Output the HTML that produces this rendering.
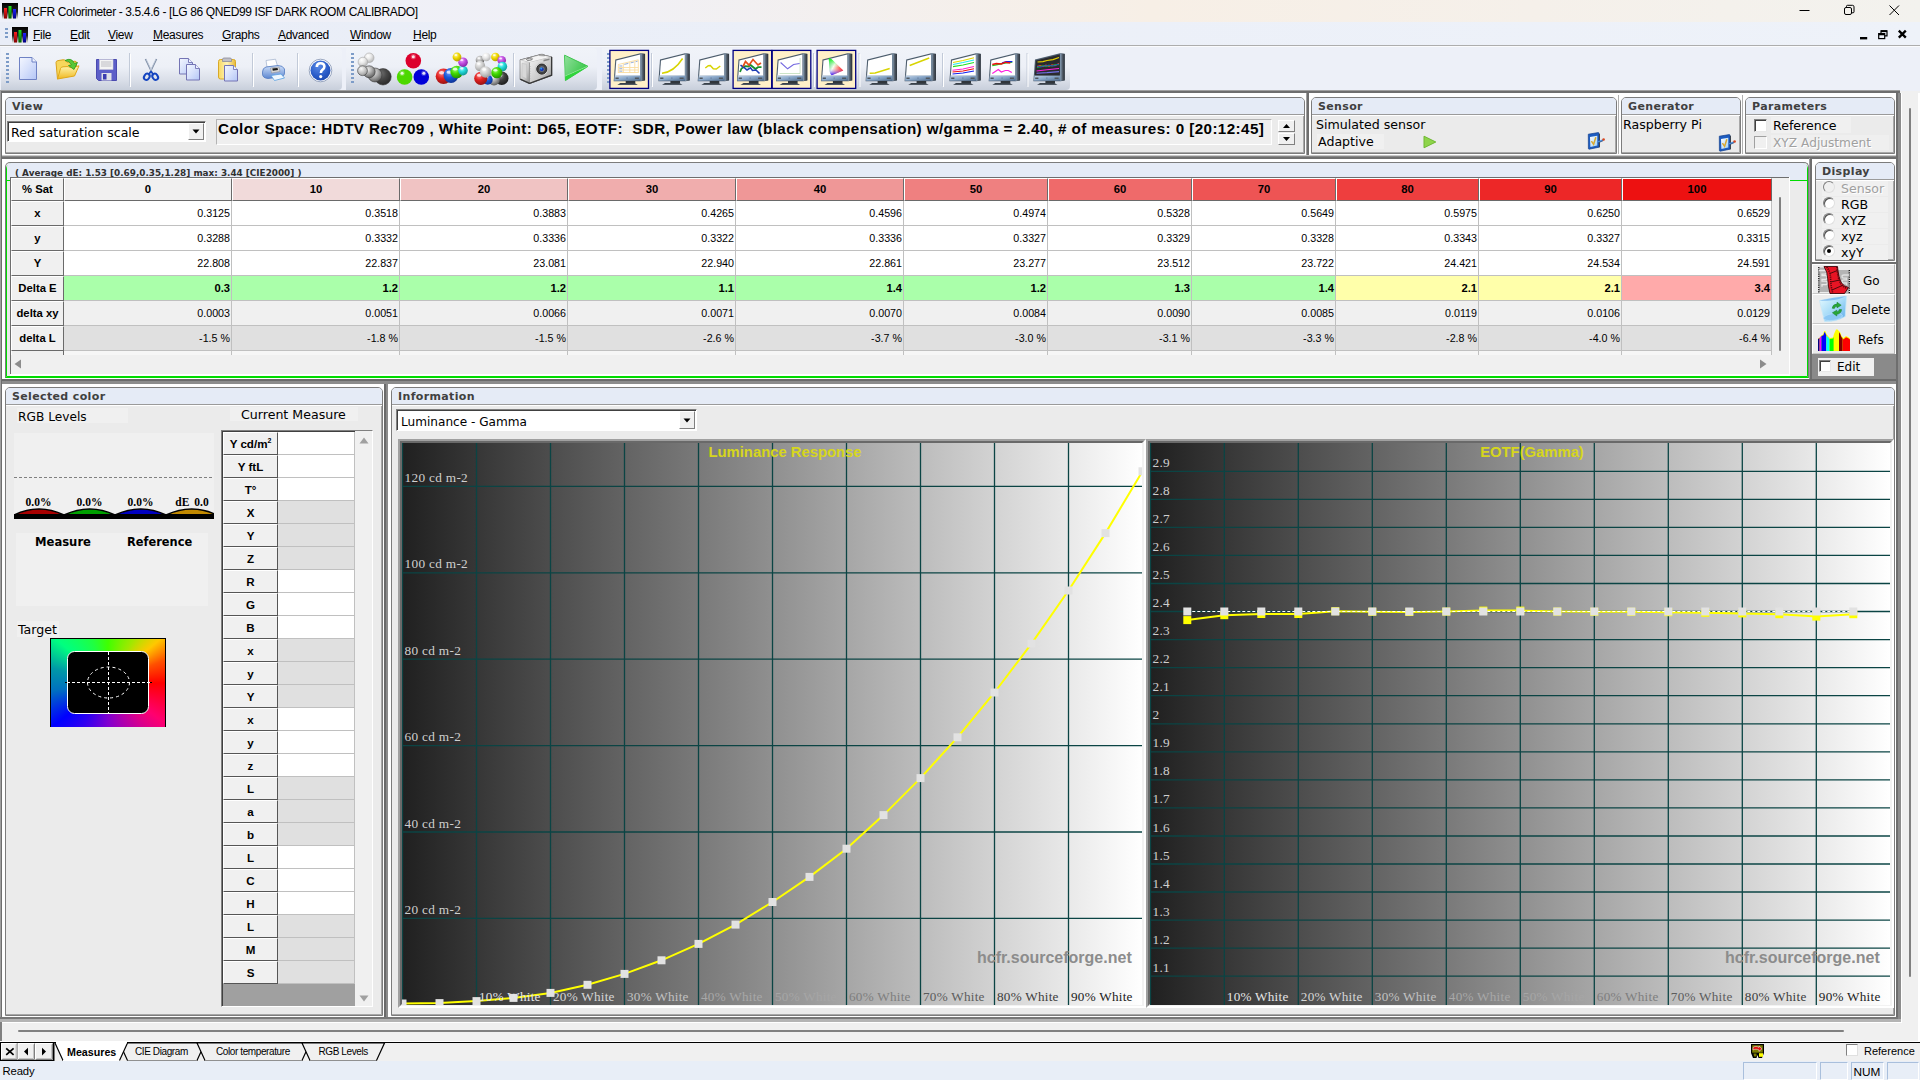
<!DOCTYPE html><html><head><meta charset="utf-8"><title>HCFR Colorimeter</title><style>
html,body{margin:0;padding:0;}
body{width:1920px;height:1080px;overflow:hidden;background:#f0f0f0;position:relative;font-family:"Liberation Sans",sans-serif;font-size:12px;color:#000;}
.a{position:absolute;}
.t{position:absolute;white-space:nowrap;line-height:1;}
.dv{font-family:"DejaVu Sans","Liberation Sans",sans-serif;}
.sf{font-family:"Liberation Serif",serif;}
.grp{position:absolute;box-sizing:border-box;border:1px solid #7c7c7c;border-radius:5px 5px 0 0;background:#ebebeb;box-shadow:inset -1px -1px 0 #a8a8a8;}
.grp .hd{position:absolute;left:0;top:0;right:0;height:16px;background:#e5ebf6;border-bottom:1px solid #9a9a9a;border-radius:4px 4px 0 0;box-shadow:0 1px 0 #fff;}
.grp .hd span{position:absolute;left:6px;top:1.5px;font:bold 11px "DejaVu Sans",sans-serif;letter-spacing:0.36px;color:#404040;white-space:nowrap;line-height:14px;}
.pane{position:absolute;background:#fff;box-sizing:border-box;}
.sunk{position:absolute;box-sizing:border-box;border:1px solid;border-color:#808080 #fff #fff #808080;}
.lbl{position:absolute;white-space:nowrap;font:12.6px "DejaVu Sans",sans-serif;line-height:15px;}
.cb{position:absolute;width:13px;height:13px;box-sizing:border-box;background:#fff;border:1px solid;border-color:#808080 #e8e8e8 #e8e8e8 #808080;box-shadow:inset 1px 1px 0 #404040;}
.rd{position:absolute;width:12px;height:12px;box-sizing:border-box;border-radius:50%;background:#fff;border:1px solid;border-color:#808080 #e0e0e0 #e0e0e0 #808080;box-shadow:inset 1px 1px 0 #505050;}
table{border-collapse:collapse;}
</style></head><body>
<div class="a" style="left:0;top:0;width:1920px;height:22px;background:linear-gradient(90deg,#eef0f9 0%,#f0f0f6 30%,#f7efe6 60%,#f5f0ea 80%,#f3f2ee 100%);"></div>
<svg class="a" style="left:2px;top:3px" width="16" height="16" viewBox="0 0 16 16"><defs><linearGradient id="lg23" x1="0" y1="0" x2="0" y2="1"><stop offset="0" stop-color="#000"/><stop offset="0.55" stop-color="#222"/><stop offset="1" stop-color="#eee"/></linearGradient><linearGradient id="lr23" x1="0" y1="0" x2="0" y2="1"><stop offset="0" stop-color="#ff2020"/><stop offset="1" stop-color="#800000"/></linearGradient><linearGradient id="lgr23" x1="0" y1="0" x2="0" y2="1"><stop offset="0" stop-color="#20e020"/><stop offset="1" stop-color="#006000"/></linearGradient><linearGradient id="lb23" x1="0" y1="0" x2="0" y2="1"><stop offset="0" stop-color="#2020ff"/><stop offset="1" stop-color="#000080"/></linearGradient></defs><rect width="16" height="16" fill="url(#lg23)"/><rect x="2" y="5" width="3" height="10.5" fill="url(#lr23)"/><rect x="6.5" y="3" width="3" height="12.5" fill="url(#lgr23)"/><rect x="11" y="6" width="3" height="9.5" fill="url(#lb23)"/></svg>
<div class="t" id="title" style="left:23px;top:6px;font-size:12px;letter-spacing:-0.37px;">HCFR Colorimeter - 3.5.4.6 - [LG 86 QNED99 ISF DARK ROOM CALIBRADO]</div>
<svg class="a" style="left:1790px;top:0" width="130" height="22" viewBox="0 0 130 22"><g stroke="#000" stroke-width="1" fill="none"><path d="M9.5 10.5h10"/><rect x="54.5" y="7.5" width="7" height="7" rx="1.5"/><path d="M56.5 7.5v-1.2q0-1 1-1h5q1.5 0 1.5 1.5v5q0 1-1 1h-1.2"/><path d="M99.5 5.5l9.5 9.5m0-9.5l-9.5 9.5"/></g></svg>
<div class="a" style="left:0;top:22px;width:1920px;height:24px;background:linear-gradient(90deg,#e9edf7,#eef2f9);"></div>
<div class="a" style="left:0;top:45px;width:1920px;height:1px;background:#adadad;"></div>
<div class="a" style="left:0;top:46px;width:1920px;height:1px;background:#fafbfd;z-index:1;"></div>
<div class="a" style="left:5px;top:28px;width:3px;height:11px;background:repeating-linear-gradient(180deg,#7d9cc8 0 2px,transparent 2px 4px);"></div>
<svg class="a" style="left:12px;top:27px" width="16" height="16" viewBox="0 0 16 16"><defs><linearGradient id="lg1227" x1="0" y1="0" x2="0" y2="1"><stop offset="0" stop-color="#000"/><stop offset="0.55" stop-color="#222"/><stop offset="1" stop-color="#eee"/></linearGradient><linearGradient id="lr1227" x1="0" y1="0" x2="0" y2="1"><stop offset="0" stop-color="#ff2020"/><stop offset="1" stop-color="#800000"/></linearGradient><linearGradient id="lgr1227" x1="0" y1="0" x2="0" y2="1"><stop offset="0" stop-color="#20e020"/><stop offset="1" stop-color="#006000"/></linearGradient><linearGradient id="lb1227" x1="0" y1="0" x2="0" y2="1"><stop offset="0" stop-color="#2020ff"/><stop offset="1" stop-color="#000080"/></linearGradient></defs><rect width="16" height="16" fill="url(#lg1227)"/><rect x="2" y="5" width="3" height="10.5" fill="url(#lr1227)"/><rect x="6.5" y="3" width="3" height="12.5" fill="url(#lgr1227)"/><rect x="11" y="6" width="3" height="9.5" fill="url(#lb1227)"/></svg>
<div class="t mn" style="left:33px;top:29px;font-size:12px;letter-spacing:-0.3px;"><u>F</u>ile</div>
<div class="t mn" style="left:70px;top:29px;font-size:12px;letter-spacing:-0.3px;"><u>E</u>dit</div>
<div class="t mn" style="left:108px;top:29px;font-size:12px;letter-spacing:-0.3px;"><u>V</u>iew</div>
<div class="t mn" style="left:153px;top:29px;font-size:12px;letter-spacing:-0.3px;"><u>M</u>easures</div>
<div class="t mn" style="left:222px;top:29px;font-size:12px;letter-spacing:-0.3px;"><u>G</u>raphs</div>
<div class="t mn" style="left:278px;top:29px;font-size:12px;letter-spacing:-0.3px;"><u>A</u>dvanced</div>
<div class="t mn" style="left:350px;top:29px;font-size:12px;letter-spacing:-0.3px;"><u>W</u>indow</div>
<div class="t mn" style="left:413px;top:29px;font-size:12px;letter-spacing:-0.3px;"><u>H</u>elp</div>
<svg class="a" style="left:1855px;top:26px" width="60" height="16" viewBox="0 0 60 16"><g stroke="#000" fill="none"><path d="M5 12.2h7.2" stroke-width="2.4"/><rect x="23.7" y="7.6" width="6" height="5" stroke-width="1.2"/><path d="M23.7 8.2h6" stroke-width="2.2"/><path d="M26 7v-2.2h6v5h-2" stroke-width="1.2"/><path d="M26 5.2h6" stroke-width="1.8"/><path d="M43.8 4.6l7 7m0-7l-7 7" stroke-width="2.3"/></g></svg>
<div class="a" style="left:0;top:46px;width:1920px;height:45px;background:#edf0f8;"></div>
<div class="a" style="left:1px;top:48px;width:341px;height:42px;border-radius:0 4px 4px 0;background:linear-gradient(180deg,#f0f3f9 0%,#edf0f7 45%,#d9dee8 78%,#c8cfdb 100%);"></div>
<div class="a" style="left:6px;top:53px;width:3px;height:30px;background:repeating-linear-gradient(180deg,#7d9cc8 0 2px,transparent 2px 4px);"></div>
<div class="a" style="left:346px;top:48px;width:251px;height:42px;border-radius:0 4px 4px 0;background:linear-gradient(180deg,#f0f3f9 0%,#edf0f7 45%,#d9dee8 78%,#c8cfdb 100%);"></div>
<div class="a" style="left:351px;top:53px;width:3px;height:30px;background:repeating-linear-gradient(180deg,#7d9cc8 0 2px,transparent 2px 4px);"></div>
<div class="a" style="left:602px;top:48px;width:468px;height:42px;border-radius:0 4px 4px 0;background:linear-gradient(180deg,#f0f3f9 0%,#edf0f7 45%,#d9dee8 78%,#c8cfdb 100%);"></div>
<div class="a" style="left:607px;top:53px;width:3px;height:30px;background:repeating-linear-gradient(180deg,#7d9cc8 0 2px,transparent 2px 4px);"></div>
<svg class="a" style="left:0;top:46px" width="1100" height="46" viewBox="0 46 1100 46">
<defs>
<linearGradient id="pg" x1="0" y1="0" x2="1" y2="1"><stop offset="0" stop-color="#f4f7ff"/><stop offset="0.5" stop-color="#d6e0fb"/><stop offset="1" stop-color="#b4c6f6"/></linearGradient>
<linearGradient id="fold" x1="0" y1="0" x2="0" y2="1"><stop offset="0" stop-color="#fff6b0"/><stop offset="1" stop-color="#f0b820"/></linearGradient>
<linearGradient id="clipb" x1="0" y1="0" x2="1" y2="0"><stop offset="0" stop-color="#f8d860"/><stop offset="0.5" stop-color="#fff4b8"/><stop offset="1" stop-color="#e8b838"/></linearGradient>
<linearGradient id="mside" x1="0" y1="0" x2="1" y2="0"><stop offset="0" stop-color="#90a8c0"/><stop offset="0.45" stop-color="#566270"/><stop offset="1" stop-color="#2a2e34"/></linearGradient>
<linearGradient id="mbez" x1="0" y1="0" x2="1" y2="1"><stop offset="0" stop-color="#c8d8ea"/><stop offset="0.5" stop-color="#88a6c8"/><stop offset="1" stop-color="#506c8c"/></linearGradient>
<linearGradient id="mbase" x1="0" y1="0" x2="0" y2="1"><stop offset="0" stop-color="#2c3238"/><stop offset="1" stop-color="#5a6470"/></linearGradient>
<linearGradient id="play" x1="0" y1="0" x2="1" y2="0.6"><stop offset="0" stop-color="#8fe09a"/><stop offset="0.5" stop-color="#66d274"/><stop offset="1" stop-color="#38c848"/></linearGradient>
<linearGradient id="cam" x1="0" y1="0" x2="1" y2="1"><stop offset="0" stop-color="#f4f4f4"/><stop offset="0.6" stop-color="#c8c8c8"/><stop offset="1" stop-color="#8c8c8c"/></linearGradient>
<linearGradient id="prn" x1="0" y1="0" x2="0" y2="1"><stop offset="0" stop-color="#cfe0fa"/><stop offset="1" stop-color="#5c86d0"/></linearGradient>
<radialGradient id="help" cx="0.4" cy="0.3" r="0.8"><stop offset="0" stop-color="#5a8ae6"/><stop offset="0.6" stop-color="#2a5cc8"/><stop offset="1" stop-color="#1a44a8"/></radialGradient>
<radialGradient id="br" cx="0.38" cy="0.3" r="0.75"><stop offset="0" stop-color="#ff6080"/><stop offset="0.45" stop-color="#d80028"/><stop offset="1" stop-color="#90001c"/></radialGradient>
<radialGradient id="bg" cx="0.38" cy="0.3" r="0.75"><stop offset="0" stop-color="#a0ff70"/><stop offset="0.45" stop-color="#40d800"/><stop offset="1" stop-color="#208800"/></radialGradient>
<radialGradient id="bb" cx="0.38" cy="0.3" r="0.75"><stop offset="0" stop-color="#6070ff"/><stop offset="0.45" stop-color="#0000d8"/><stop offset="1" stop-color="#000080"/></radialGradient>
<radialGradient id="by" cx="0.38" cy="0.3" r="0.75"><stop offset="0" stop-color="#fff8a0"/><stop offset="0.45" stop-color="#f0d800"/><stop offset="1" stop-color="#b09800"/></radialGradient>
<radialGradient id="bm" cx="0.38" cy="0.3" r="0.75"><stop offset="0" stop-color="#f0a0ff"/><stop offset="0.45" stop-color="#c050e0"/><stop offset="1" stop-color="#8020a0"/></radialGradient>
<radialGradient id="bc" cx="0.38" cy="0.3" r="0.75"><stop offset="0" stop-color="#a0ffff"/><stop offset="0.45" stop-color="#20d8d8"/><stop offset="1" stop-color="#109090"/></radialGradient>
<radialGradient id="bw" cx="0.38" cy="0.3" r="0.75"><stop offset="0" stop-color="#ffffff"/><stop offset="0.45" stop-color="#e8e8e8"/><stop offset="1" stop-color="#b0b0b0"/></radialGradient>
<radialGradient id="bl" cx="0.38" cy="0.3" r="0.75"><stop offset="0" stop-color="#f8f8f8"/><stop offset="0.45" stop-color="#d0d0d0"/><stop offset="1" stop-color="#989898"/></radialGradient>
<radialGradient id="bk" cx="0.38" cy="0.3" r="0.75"><stop offset="0" stop-color="#f0f0f0"/><stop offset="0.45" stop-color="#b0b0b0"/><stop offset="1" stop-color="#585858"/></radialGradient>
<radialGradient id="bd" cx="0.38" cy="0.3" r="0.75"><stop offset="0" stop-color="#707070"/><stop offset="0.45" stop-color="#484848"/><stop offset="1" stop-color="#282828"/></radialGradient>
<radialGradient id="bx" cx="0.38" cy="0.3" r="0.75"><stop offset="0" stop-color="#909090"/><stop offset="0.45" stop-color="#404040"/><stop offset="1" stop-color="#181818"/></radialGradient>
<radialGradient id="bR" cx="0.38" cy="0.3" r="0.75"><stop offset="0" stop-color="#ff8080"/><stop offset="0.45" stop-color="#e02020"/><stop offset="1" stop-color="#901010"/></radialGradient>
<radialGradient id="bB" cx="0.38" cy="0.3" r="0.75"><stop offset="0" stop-color="#70a0ff"/><stop offset="0.45" stop-color="#1858d8"/><stop offset="1" stop-color="#0c3090"/></radialGradient>
</defs>
<path d="M19.5 57.5H32L36.5 62V79.5H19.5Z" fill="url(#pg)" stroke="#6f82c4" stroke-width="1"/><path d="M32 57.5V62H36.5" fill="#eef2ff" stroke="#6f82c4" stroke-width="1"/>
<path d="M56 62.5Q56 61 58 60.6L63 59.8Q65 59.6 66 61L67 62.3L75 61.2Q76.5 61.2 76.5 63V66L57.5 79Z" fill="#f7d75c" stroke="#d9a21c" stroke-width="1"/>
<path d="M57.5 79L60.5 68.5Q61 67 63 66.8L67 66.6Q68.5 66.5 69.5 67.3Q71 68 73 67.4L79 65.8L74.5 76Z" fill="url(#fold)" stroke="#e0a818" stroke-width="1"/>
<path d="M65 60.5Q71.5 57 74.5 63.5L77.5 62.5L74 69.5L68.5 65.5L71.5 64.8Q69.5 60.8 65 60.5Z" fill="#58c838" stroke="#2c9a1c" stroke-width="0.8"/>
<path d="M96.5 59.5H116.5V80.5H98.5L96.5 78.5Z" fill="#5c5ec8" stroke="#4a4ab0" stroke-width="1"/>
<rect x="99.5" y="59.5" width="13.5" height="10" fill="#f4f4f4" stroke="#c8c8d8" stroke-width="0.6"/><path d="M101 62h10.5M101 64h10.5M101 66h10.5" stroke="#b0b0b8" stroke-width="0.8"/>
<rect x="101.5" y="73" width="10" height="7.5" fill="#e0e0e8"/><rect x="103" y="74" width="3.5" height="5.5" fill="#3c3cb0"/>
<path d="M129.5 53V86" stroke="#c2cad8" stroke-width="1"/><path d="M130.5 54V87" stroke="#fff" stroke-width="1"/>
<path d="M145.5 59L152.2 73M156.5 59L149.8 73" stroke="#7c8ca4" stroke-width="1.6" fill="none"/><path d="M146.3 59.5L151.6 70.5M155.7 59.5L150.4 70.5" stroke="#d8e0ec" stroke-width="0.7" fill="none"/>
<ellipse cx="146.8" cy="76.8" rx="2.6" ry="3.3" transform="rotate(35 146.8 76.8)" fill="none" stroke="#1444c0" stroke-width="2"/><ellipse cx="155.2" cy="76.8" rx="2.6" ry="3.3" transform="rotate(-35 155.2 76.8)" fill="none" stroke="#1444c0" stroke-width="2"/><path d="M149 74L151 71.5L153 74" stroke="#1444c0" stroke-width="1.6" fill="none"/>
<path d="M179.5 58.5H188.5L192.5 62.5V74.0H179.5Z" fill="url(#pg)" stroke="#7474b4" stroke-width="1"/><path d="M188.5 58.5V62.5H192.5" fill="#eef2ff" stroke="#7474b4" stroke-width="0.9"/>
<path d="M186.5 64.5H195.5L199.5 68.5V80.0H186.5Z" fill="url(#pg)" stroke="#7474b4" stroke-width="1"/><path d="M195.5 64.5V68.5H199.5" fill="#eef2ff" stroke="#7474b4" stroke-width="0.9"/>
<rect x="218.5" y="59.5" width="17" height="19.5" rx="2" fill="url(#clipb)" stroke="#d8a828" stroke-width="1"/><path d="M222.5 61.5V59.5Q222.5 58 224 58H230Q231.5 58 231.5 59.5V61.5Z" fill="#c0c0c8" stroke="#8c8c98" stroke-width="0.8"/>
<path d="M224.5 65.5H233.5L237.5 69.5V81.0H224.5Z" fill="url(#pg)" stroke="#7474b4" stroke-width="1"/><path d="M233.5 65.5V69.5H237.5" fill="#eef2ff" stroke="#7474b4" stroke-width="0.9"/>
<path d="M252.5 53V86" stroke="#c2cad8" stroke-width="1"/><path d="M253.5 54V87" stroke="#fff" stroke-width="1"/>
<path d="M267 67L266 60.5L275.5 59.2L277.5 66Z" fill="#fff" stroke="#a8b8d0" stroke-width="0.8"/>
<path d="M262.5 72Q262.5 68 266 67L278 65.5Q283 65.5 284.5 69V73Q284.5 76.5 280 77L268 78.5Q262.5 78 262.5 74Z" fill="url(#prn)" stroke="#5078c0" stroke-width="0.8"/>
<path d="M270.5 68L279 67L280 71.5L271.5 73Z" fill="#d8d8d8" stroke="#888" stroke-width="0.5"/><path d="M272.3 68.6L277.5 68L278 70L272.8 70.7Z" fill="#181818"/>
<path d="M271 75.5L281 74L284.5 78L274.5 80.5Z" fill="#f0f8ff" stroke="#58a0e0" stroke-width="0.8"/>
<path d="M297.5 53V86" stroke="#c2cad8" stroke-width="1"/><path d="M298.5 54V87" stroke="#fff" stroke-width="1"/>
<circle cx="320.5" cy="70.5" r="11.3" fill="#fff" stroke="#8090b0" stroke-width="0.8"/><circle cx="320.5" cy="70.5" r="10" fill="url(#help)"/>
<path d="M316.8 67Q316.8 63.2 320.6 63.2Q324.4 63.2 324.4 66.6Q324.4 68.6 322.4 69.8Q320.9 70.8 320.9 73" fill="none" stroke="#fff" stroke-width="2.6"/><circle cx="320.7" cy="76.6" r="1.6" fill="#fff"/>
<circle cx="369.2" cy="57.8" r="4.8" fill="url(#bw)" stroke="#a8a8a8" stroke-width="0.6"/>
<circle cx="362.9" cy="62" r="4.8" fill="url(#bw)" stroke="#a8a8a8" stroke-width="0.6"/>
<circle cx="383" cy="76.8" r="8.2" fill="url(#bd)" stroke="#383838" stroke-width="0.6"/>
<circle cx="375" cy="75" r="7" fill="url(#bk)" stroke="#383838" stroke-width="0.6"/>
<circle cx="369.2" cy="71.8" r="6" fill="url(#bk)" stroke="#383838" stroke-width="0.6"/>
<circle cx="362.5" cy="70.7" r="4.9" fill="url(#bl)" stroke="#383838" stroke-width="0.6"/>
<circle cx="413.3" cy="60.7" r="7.8" fill="#dc002c"/><circle cx="413.3" cy="56.7" r="1.5" fill="#fff" opacity="0.85"/><circle cx="413.3" cy="56.7" r="2.6" fill="#fff" opacity="0.25"/>
<circle cx="404.6" cy="77" r="7.8" fill="#4cd800"/><circle cx="402.1" cy="73.2" r="1.5" fill="#fff" opacity="0.85"/><circle cx="402.1" cy="73.2" r="2.6" fill="#fff" opacity="0.25"/>
<circle cx="421.3" cy="77" r="7.8" fill="#0000d8"/><circle cx="423.8" cy="73.2" r="1.5" fill="#fff" opacity="0.85"/><circle cx="423.8" cy="73.2" r="2.6" fill="#fff" opacity="0.25"/>
<circle cx="443.5" cy="76.3" r="7.8" fill="url(#bR)"/><ellipse cx="441.6" cy="72.8" rx="2.7" ry="1.7" fill="#fff" opacity="0.75"/>
<circle cx="451" cy="75.5" r="7.4" fill="url(#bB)"/><ellipse cx="449.1" cy="72.2" rx="2.6" ry="1.6" fill="#fff" opacity="0.75"/>
<circle cx="456.7" cy="72" r="6.3" fill="url(#bg)"/><ellipse cx="455.1" cy="69.2" rx="2.2" ry="1.4" fill="#fff" opacity="0.75"/>
<circle cx="463" cy="70.6" r="4.8" fill="url(#bc)"/><ellipse cx="461.8" cy="68.4" rx="1.7" ry="1.1" fill="#fff" opacity="0.75"/>
<circle cx="463" cy="62.2" r="4.8" fill="url(#bm)"/><ellipse cx="461.8" cy="60.0" rx="1.7" ry="1.1" fill="#fff" opacity="0.75"/>
<circle cx="457" cy="57" r="4.4" fill="url(#by)"/><ellipse cx="455.9" cy="55.0" rx="1.5" ry="1.0" fill="#fff" opacity="0.75"/>
<circle cx="480" cy="60" r="4.3" fill="url(#bk)"/><ellipse cx="478.9" cy="58.1" rx="1.5" ry="0.9" fill="#fff" opacity="0.75"/>
<circle cx="480" cy="66" r="5.2" fill="url(#bl)"/><ellipse cx="478.7" cy="63.7" rx="1.8" ry="1.1" fill="#fff" opacity="0.75"/>
<circle cx="486.3" cy="57" r="4.3" fill="url(#bw)"/><ellipse cx="485.2" cy="55.1" rx="1.5" ry="0.9" fill="#fff" opacity="0.75"/>
<circle cx="495.4" cy="57" r="4.3" fill="url(#by)"/><ellipse cx="494.3" cy="55.1" rx="1.5" ry="0.9" fill="#fff" opacity="0.75"/>
<circle cx="501.7" cy="60.3" r="4.3" fill="url(#bm)"/><ellipse cx="500.6" cy="58.4" rx="1.5" ry="0.9" fill="#fff" opacity="0.75"/>
<circle cx="502.4" cy="66.6" r="4.8" fill="url(#bc)"/><ellipse cx="501.2" cy="64.4" rx="1.7" ry="1.1" fill="#fff" opacity="0.75"/>
<circle cx="501.7" cy="78.3" r="6.8" fill="url(#bx)"/><ellipse cx="500.0" cy="75.2" rx="2.4" ry="1.5" fill="#fff" opacity="0.75"/>
<circle cx="494" cy="79.7" r="5.8" fill="url(#bk)"/><ellipse cx="492.6" cy="77.1" rx="2.0" ry="1.3" fill="#fff" opacity="0.75"/>
<circle cx="487.7" cy="79.7" r="5" fill="url(#bB)"/><ellipse cx="486.4" cy="77.5" rx="1.8" ry="1.1" fill="#fff" opacity="0.75"/>
<circle cx="480.8" cy="78.3" r="6.6" fill="url(#bR)"/><ellipse cx="479.2" cy="75.3" rx="2.3" ry="1.5" fill="#fff" opacity="0.75"/>
<circle cx="496.8" cy="72.7" r="5.6" fill="url(#bg)"/><ellipse cx="495.4" cy="70.2" rx="2.0" ry="1.2" fill="#fff" opacity="0.75"/>
<circle cx="485.6" cy="72" r="5.8" fill="url(#bl)"/><ellipse cx="484.2" cy="69.4" rx="2.0" ry="1.3" fill="#fff" opacity="0.75"/>
<path d="M513.5 53V86" stroke="#c2cad8" stroke-width="1"/><path d="M514.5 54V87" stroke="#fff" stroke-width="1"/>
<path d="M520.3 60L541 54.5L551.6 57V75.2L529.5 83.4L520.3 79.2Z" fill="#e8e8e8" stroke="#484848" stroke-width="1.1" stroke-linejoin="round"/>
<path d="M520.3 60L541 54.5L551.6 57L529.5 62.6Z" fill="#f4f4f4" stroke="#9a9a9a" stroke-width="0.6"/>
<path d="M520.3 60L529.5 62.6V83.4L520.3 79.2Z" fill="url(#cam)"/>
<path d="M529.5 62.6L551.6 57V75.2L529.5 83.4Z" fill="url(#cam)"/>
<path d="M529.5 62.6V83.4" stroke="#8a8a8a" stroke-width="0.8"/><path d="M520.3 79.2L529.5 83.4L551.6 75.2V57" fill="none" stroke="#383838" stroke-width="1.3"/>
<path d="M522 63.2L526.5 64.4V78.6L522 76.8Z" fill="#d8d8d8" stroke="#bcbcbc" stroke-width="0.5"/><path d="M530.5 66v14" stroke="#c8c8c8" stroke-width="1" stroke-dasharray="0.8 1.6"/>
<ellipse cx="529.5" cy="59.2" rx="3" ry="1.1" fill="#e0e0e0" stroke="#505050" stroke-width="0.7" transform="rotate(-8 529.5 59.2)"/><path d="M539.5 54.6Q542 53.3 544.5 54.9L544.5 56L539.5 55.6Z" fill="#b0b0b0" stroke="#707070" stroke-width="0.4"/><path d="M543.5 59.8L549.5 58.4V60L543.5 61.4Z" fill="#888"/>
<circle cx="541.8" cy="69.1" r="6.3" fill="#f0f0f0" stroke="#b0b0b0" stroke-width="0.5"/><circle cx="541.8" cy="69.1" r="5.1" fill="#4a4a4a" stroke="#1c1c1c" stroke-width="0.9"/><circle cx="541.8" cy="69.1" r="3.5" fill="#6c7078" stroke="#2a2a2a" stroke-width="0.6"/><circle cx="541.8" cy="69.3" r="1.9" fill="#1838b8"/><circle cx="541.2" cy="68.6" r="1" fill="#2a9cf4"/>
<path d="M564.6 55.2L588 66.3L565.4 80.6Z" fill="#34c944" stroke="#3cc44c" stroke-width="1" stroke-linejoin="round"/>
<path d="M565 55.8L587 66.4L565.3 76Z" fill="url(#play)"/><path d="M565.2 76.2L587.2 66.5" stroke="#b4f0b4" stroke-width="0.7"/><path d="M565.3 76.6L587.6 66.7L565.6 80.2Z" fill="#2fd63a"/>
<rect x="609.9" y="50.4" width="38.6" height="38" fill="#fff0c8" stroke="#000080" stroke-width="1.3"/>
<g transform="translate(613.3 53)"><path d="M2 6.4L27 0.2L31.8 0.7V27.4L27.6 28.2H0.4Z" fill="#4c5c6c"/><path d="M27.2 0.6L31.6 1V27.2L27.2 28Z" fill="url(#mside)"/><path d="M1.6 22.2H27.2V27.8H0.8Z" fill="url(#mbez)"/><path d="M3 7.4L26.8 1.6V22.4H1.9Z" fill="#fff"/><path d="M2.2 24.4h3.2v1.5h-3.2zM21.6 24.4h4v1.6h-4z" fill="#505860"/><rect x="13" y="24.5" width="1.6" height="1.3" fill="#7088a8"/><path d="M12.4 28H22V30H12.4Z" fill="#30363c"/><path d="M4 32L7 29.9H21.5L24.5 32Z" fill="url(#mbase)"/></g>
<g transform="translate(613.3 53)"><g stroke="#fbdca0" stroke-width="0.9" fill="none"><path d="M5 11.5L25 6.8M5 14.5H25M5 17H25M5 19.5H25M5 11.5V20M10 10.3V20M16.5 8.8V20M21.5 7.6V20M25 6.8V20"/></g><path d="M6 13h3M6 15.7h3M6 18.2h3M11 11.4l4-1M17.5 9.8l3-0.7M22.3 8.7l2-0.5" stroke="#9ab0d8" stroke-width="1"/></g>
<path d="M651.5 53V86" stroke="#c2cad8" stroke-width="1"/><path d="M652.5 54V87" stroke="#fff" stroke-width="1"/>
<g transform="translate(658 53)"><path d="M2 6.4L27 0.2L31.8 0.7V27.4L27.6 28.2H0.4Z" fill="#4c5c6c"/><path d="M27.2 0.6L31.6 1V27.2L27.2 28Z" fill="url(#mside)"/><path d="M1.6 22.2H27.2V27.8H0.8Z" fill="url(#mbez)"/><path d="M3 7.4L26.8 1.6V22.4H1.9Z" fill="#fff"/><path d="M2.2 24.4h3.2v1.5h-3.2zM21.6 24.4h4v1.6h-4z" fill="#505860"/><rect x="13" y="24.5" width="1.6" height="1.3" fill="#7088a8"/><path d="M12.4 28H22V30H12.4Z" fill="#30363c"/><path d="M4 32L7 29.9H21.5L24.5 32Z" fill="url(#mbase)"/></g>
<g transform="translate(658 53)"><path d="M4 20.3Q16 19 24.6 5.5" stroke="#d8d400" stroke-width="1.5" fill="none"/></g>
<g transform="translate(697.3 53)"><path d="M2 6.4L27 0.2L31.8 0.7V27.4L27.6 28.2H0.4Z" fill="#4c5c6c"/><path d="M27.2 0.6L31.6 1V27.2L27.2 28Z" fill="url(#mside)"/><path d="M1.6 22.2H27.2V27.8H0.8Z" fill="url(#mbez)"/><path d="M3 7.4L26.8 1.6V22.4H1.9Z" fill="#fff"/><path d="M2.2 24.4h3.2v1.5h-3.2zM21.6 24.4h4v1.6h-4z" fill="#505860"/><rect x="13" y="24.5" width="1.6" height="1.3" fill="#7088a8"/><path d="M12.4 28H22V30H12.4Z" fill="#30363c"/><path d="M4 32L7 29.9H21.5L24.5 32Z" fill="url(#mbase)"/></g>
<g transform="translate(697.3 53)"><path d="M8 15L11 12.7L13 12.6L16 15.8L19 16L23 13" stroke="#d8d400" stroke-width="1.5" fill="none"/></g>
<rect x="733.1" y="50.4" width="38.6" height="38" fill="#fff0c8" stroke="#000080" stroke-width="1.3"/>
<g transform="translate(736.5 53)"><path d="M2 6.4L27 0.2L31.8 0.7V27.4L27.6 28.2H0.4Z" fill="#4c5c6c"/><path d="M27.2 0.6L31.6 1V27.2L27.2 28Z" fill="url(#mside)"/><path d="M1.6 22.2H27.2V27.8H0.8Z" fill="url(#mbez)"/><path d="M3 7.4L26.8 1.6V22.4H1.9Z" fill="#fff"/><path d="M2.2 24.4h3.2v1.5h-3.2zM21.6 24.4h4v1.6h-4z" fill="#505860"/><rect x="13" y="24.5" width="1.6" height="1.3" fill="#7088a8"/><path d="M12.4 28H22V30H12.4Z" fill="#30363c"/><path d="M4 32L7 29.9H21.5L24.5 32Z" fill="url(#mbase)"/></g>
<g transform="translate(736.5 53)"><path d="M3.5 19L5 15.5L8.5 13.2L12 13.5L14 12L19 16L21.5 14.2H25" stroke="#18902c" stroke-width="1.8" fill="none"/><path d="M4 12.2L7.5 14.5L10.5 17L14 14.8L16 17.5L19.5 17L23 20.5" stroke="#1c3cb4" stroke-width="1.6" fill="none"/><path d="M6.5 13.5L9 8.5L12.5 12.2L16.5 6.5L21.5 12L24.5 10" stroke="#e4501c" stroke-width="1.7" fill="none"/></g>
<rect x="772.2" y="50.4" width="38.6" height="38" fill="#fff0c8" stroke="#000080" stroke-width="1.3"/>
<g transform="translate(775.6 53)"><path d="M2 6.4L27 0.2L31.8 0.7V27.4L27.6 28.2H0.4Z" fill="#4c5c6c"/><path d="M27.2 0.6L31.6 1V27.2L27.2 28Z" fill="url(#mside)"/><path d="M1.6 22.2H27.2V27.8H0.8Z" fill="url(#mbez)"/><path d="M3 7.4L26.8 1.6V22.4H1.9Z" fill="#fff"/><path d="M2.2 24.4h3.2v1.5h-3.2zM21.6 24.4h4v1.6h-4z" fill="#505860"/><rect x="13" y="24.5" width="1.6" height="1.3" fill="#7088a8"/><path d="M12.4 28H22V30H12.4Z" fill="#30363c"/><path d="M4 32L7 29.9H21.5L24.5 32Z" fill="url(#mbase)"/></g>
<g transform="translate(775.6 53)"><path d="M4 20.5H24.5V5" stroke="#b8d8b0" stroke-width="0.7" fill="none"/><path d="M5 9.5L12 15.8L18 11.5L24 10.5" stroke="#7468e0" stroke-width="1.1" fill="none"/></g>
<path d="M813.5 53V86" stroke="#c2cad8" stroke-width="1"/><path d="M814.5 54V87" stroke="#fff" stroke-width="1"/>
<rect x="817.1" y="50.4" width="38.6" height="38" fill="#fff0c8" stroke="#000080" stroke-width="1.3"/>
<g transform="translate(820.5 53)"><path d="M2 6.4L27 0.2L31.8 0.7V27.4L27.6 28.2H0.4Z" fill="#4c5c6c"/><path d="M27.2 0.6L31.6 1V27.2L27.2 28Z" fill="url(#mside)"/><path d="M1.6 22.2H27.2V27.8H0.8Z" fill="url(#mbez)"/><path d="M3 7.4L26.8 1.6V22.4H1.9Z" fill="#fff"/><path d="M2.2 24.4h3.2v1.5h-3.2zM21.6 24.4h4v1.6h-4z" fill="#505860"/><rect x="13" y="24.5" width="1.6" height="1.3" fill="#7088a8"/><path d="M12.4 28H22V30H12.4Z" fill="#30363c"/><path d="M4 32L7 29.9H21.5L24.5 32Z" fill="url(#mbase)"/></g>
<linearGradient id="cie1" x1="0" y1="0" x2="1" y2="0.6"><stop offset="0" stop-color="#00c040"/><stop offset="0.45" stop-color="#f8fff0"/><stop offset="1" stop-color="#ff0000"/></linearGradient><linearGradient id="cie2" x1="0" y1="0" x2="0" y2="1"><stop offset="0" stop-color="#00ff00" stop-opacity="0.9"/><stop offset="0.55" stop-color="#ffffff" stop-opacity="0"/><stop offset="1" stop-color="#2000ff" stop-opacity="0.95"/></linearGradient>
<g transform="translate(820.5 53)"><path d="M8.3 5.5Q10.5 5 12 7L22.8 17.5L11.3 22.3Q9.6 21.5 9 18Z" fill="url(#cie1)"/><path d="M8.3 5.5Q10.5 5 12 7L22.8 17.5L11.3 22.3Q9.6 21.5 9 18Z" fill="url(#cie2)"/></g>
<path d="M859 53V86" stroke="#c2cad8" stroke-width="1"/><path d="M860 54V87" stroke="#fff" stroke-width="1"/>
<g transform="translate(865.2 53)"><path d="M2 6.4L27 0.2L31.8 0.7V27.4L27.6 28.2H0.4Z" fill="#4c5c6c"/><path d="M27.2 0.6L31.6 1V27.2L27.2 28Z" fill="url(#mside)"/><path d="M1.6 22.2H27.2V27.8H0.8Z" fill="url(#mbez)"/><path d="M3 7.4L26.8 1.6V22.4H1.9Z" fill="#fff"/><path d="M2.2 24.4h3.2v1.5h-3.2zM21.6 24.4h4v1.6h-4z" fill="#505860"/><rect x="13" y="24.5" width="1.6" height="1.3" fill="#7088a8"/><path d="M12.4 28H22V30H12.4Z" fill="#30363c"/><path d="M4 32L7 29.9H21.5L24.5 32Z" fill="url(#mbase)"/></g>
<g transform="translate(865.2 53)"><path d="M4.5 20.3L10 20L24.5 15.5" stroke="#d8d400" stroke-width="1.4" fill="none"/></g>
<g transform="translate(904.2 53)"><path d="M2 6.4L27 0.2L31.8 0.7V27.4L27.6 28.2H0.4Z" fill="#4c5c6c"/><path d="M27.2 0.6L31.6 1V27.2L27.2 28Z" fill="url(#mside)"/><path d="M1.6 22.2H27.2V27.8H0.8Z" fill="url(#mbez)"/><path d="M3 7.4L26.8 1.6V22.4H1.9Z" fill="#fff"/><path d="M2.2 24.4h3.2v1.5h-3.2zM21.6 24.4h4v1.6h-4z" fill="#505860"/><rect x="13" y="24.5" width="1.6" height="1.3" fill="#7088a8"/><path d="M12.4 28H22V30H12.4Z" fill="#30363c"/><path d="M4 32L7 29.9H21.5L24.5 32Z" fill="url(#mbase)"/></g>
<g transform="translate(904.2 53)"><path d="M5.5 12.5L25 5" stroke="#d8d400" stroke-width="1.5" fill="none"/></g>
<path d="M942.5 53V86" stroke="#c2cad8" stroke-width="1"/><path d="M943.5 54V87" stroke="#fff" stroke-width="1"/>
<g transform="translate(949 53)"><path d="M2 6.4L27 0.2L31.8 0.7V27.4L27.6 28.2H0.4Z" fill="#4c5c6c"/><path d="M27.2 0.6L31.6 1V27.2L27.2 28Z" fill="url(#mside)"/><path d="M1.6 22.2H27.2V27.8H0.8Z" fill="url(#mbez)"/><path d="M3 7.4L26.8 1.6V22.4H1.9Z" fill="#fff"/><path d="M2.2 24.4h3.2v1.5h-3.2zM21.6 24.4h4v1.6h-4z" fill="#505860"/><rect x="13" y="24.5" width="1.6" height="1.3" fill="#7088a8"/><path d="M12.4 28H22V30H12.4Z" fill="#30363c"/><path d="M4 32L7 29.9H21.5L24.5 32Z" fill="url(#mbase)"/></g>
<g transform="translate(949 53)"><g stroke-width="1.1" fill="none"><path d="M4 9.5L14 7.5L25 4.8" stroke="#e4d800"/><path d="M4 11.5L14 9.5L25 7" stroke="#20e8f0"/><path d="M4 13.6L14 12L25 9.5" stroke="#20e020"/><path d="M3.5 17.2L14 16L25 13.5" stroke="#ff20d0"/><path d="M3.5 19L14 18L25 15.7" stroke="#f01010"/><path d="M3.5 21L14 20L25 18" stroke="#1020f0"/></g></g>
<g transform="translate(988.3 53)"><path d="M2 6.4L27 0.2L31.8 0.7V27.4L27.6 28.2H0.4Z" fill="#4c5c6c"/><path d="M27.2 0.6L31.6 1V27.2L27.2 28Z" fill="url(#mside)"/><path d="M1.6 22.2H27.2V27.8H0.8Z" fill="url(#mbez)"/><path d="M3 7.4L26.8 1.6V22.4H1.9Z" fill="#fff"/><path d="M2.2 24.4h3.2v1.5h-3.2zM21.6 24.4h4v1.6h-4z" fill="#505860"/><rect x="13" y="24.5" width="1.6" height="1.3" fill="#7088a8"/><path d="M12.4 28H22V30H12.4Z" fill="#30363c"/><path d="M4 32L7 29.9H21.5L24.5 32Z" fill="url(#mbase)"/></g>
<g transform="translate(988.3 53)"><g stroke-width="1.4" fill="none"><path d="M4 12.5L8 11.8L14 10.5L18 9.8L24 9" stroke="#20d020"/><path d="M14 10L18 8.6L24 8.6" stroke="#1020f0"/><path d="M4 11.5L8 10.5L13 11L17 9.2L22 10" stroke="#f01010"/><path d="M4 20.5L7 18.5L10 16.5L13 19L17 17.5L20 17.5L23.5 19.5" stroke="#ff20e0" stroke-width="1.2"/></g></g>
<path d="M1027 53V86" stroke="#c2cad8" stroke-width="1"/><path d="M1028 54V87" stroke="#fff" stroke-width="1"/>
<g transform="translate(1033 53)"><path d="M2 6.4L27 0.2L31.8 0.7V27.4L27.6 28.2H0.4Z" fill="#4c5c6c"/><path d="M27.2 0.6L31.6 1V27.2L27.2 28Z" fill="url(#mside)"/><path d="M1.6 22.2H27.2V27.8H0.8Z" fill="url(#mbez)"/><path d="M3 7.4L26.8 1.6V22.4H1.9Z" fill="#2a2a2e"/><path d="M2.2 24.4h3.2v1.5h-3.2zM21.6 24.4h4v1.6h-4z" fill="#505860"/><rect x="13" y="24.5" width="1.6" height="1.3" fill="#7088a8"/><path d="M12.4 28H22V30H12.4Z" fill="#30363c"/><path d="M4 32L7 29.9H21.5L24.5 32Z" fill="url(#mbase)"/></g>
<g transform="translate(1033 53)"><g stroke-width="1.1" fill="none"><path d="M4.5 9L10 8.6L14 7.5L20 6.6L26 4.5" stroke="#e8d400"/><path d="M4 13.6L7 12.5L10 13.6L13 12L16 13.4L19 11.8L22 12.6L26 10.5" stroke="#e85020"/><path d="M4 14.6L7 13.8L10 12.6L13 13.6L16 12.2L19 13.2L22 11.6L26 11.6" stroke="#18a030"/><path d="M4 13.2L8 14L12 12.8L17 12.6L21 12.9L26 11" stroke="#2848e0" stroke-width="0.8"/><path d="M3.5 18L14 16.8L26 15.5" stroke="#ff20e0"/><path d="M3.5 20.2L14 19.6L26 18.6" stroke="#7070e8"/></g></g>
</svg>
<div class="a" style="left:0;top:90px;width:1900px;height:1px;background:#a0a0a0;"></div>
<div class="a" style="left:0;top:91px;width:1900px;height:2px;background:#6e6e6e;"></div>
<div class="a" style="left:0;top:91px;width:1px;height:930px;background:#a0a0a0;"></div>
<div class="a" style="left:1px;top:91px;width:1px;height:930px;background:#6e6e6e;"></div>
<div class="pane" style="left:2px;top:93px;width:1894px;height:62px;"></div>
<div class="pane" style="left:2px;top:159px;width:1894px;height:220px;"></div>
<div class="pane" style="left:2px;top:384px;width:382px;height:634px;"></div>
<div class="pane" style="left:388px;top:384px;width:1508px;height:634px;"></div>
<div class="a" style="left:2px;top:155px;width:1894px;height:1px;background:#c8c8c8;"></div>
<div class="a" style="left:2px;top:156px;width:1894px;height:1px;background:#888;"></div>
<div class="a" style="left:2px;top:157px;width:1894px;height:2px;background:#6e6e6e;"></div>
<div class="a" style="left:2px;top:379px;width:1894px;height:2px;background:#6a6a6a;"></div>
<div class="a" style="left:2px;top:381px;width:1894px;height:3px;background:#8c8c8c;"></div>
<div class="a" style="left:384px;top:384px;width:2px;height:634px;background:#6a6a6a;"></div>
<div class="a" style="left:386px;top:384px;width:2px;height:634px;background:#8c8c8c;"></div>
<div class="a" style="left:1896px;top:93px;width:2px;height:926px;background:#6e6e6e;"></div>
<div class="a" style="left:1898px;top:93px;width:3px;height:929px;background:#8c8c8c;"></div>
<div class="a" style="left:1901px;top:93px;width:1px;height:930px;background:#fff;"></div>
<div class="a" style="left:0;top:1017px;width:1898px;height:2px;background:#787878;"></div>
<div class="a" style="left:0;top:1019px;width:1901px;height:3px;background:#b4b4b4;"></div>
<div class="a" style="left:0;top:1022px;width:1902px;height:1px;background:#fff;"></div>
<div class="a" style="left:1909px;top:108px;width:2px;height:869px;background:#808080;border-radius:1px;"></div>
<div class="a" style="left:18px;top:1030px;width:1826px;height:2px;background:#808080;border-radius:1px;"></div>
<div class="a" style="left:1918px;top:93px;width:2px;height:948px;background:#fff;"></div>
<div class="grp" style="left:5px;top:97px;width:1300px;height:57px;"><div class="hd"><span>View</span></div></div>
<div class="grp" style="left:1311px;top:97px;width:306px;height:57px;"><div class="hd"><span>Sensor</span></div></div>
<div class="grp" style="left:1621px;top:97px;width:120px;height:57px;"><div class="hd"><span>Generator</span></div></div>
<div class="grp" style="left:1745px;top:97px;width:150px;height:57px;"><div class="hd"><span>Parameters</span></div></div>
<!-- vertical splitters between top groups -->
<div class="a" style="left:1306px;top:93px;width:1px;height:62px;background:#a0a0a0;"></div><div class="a" style="left:1307px;top:93px;width:2px;height:62px;background:#6e6e6e;"></div>
<div class="a" style="left:1618px;top:95px;width:1px;height:59px;background:#b0b0b0;"></div>
<div class="a" style="left:1742px;top:95px;width:1px;height:59px;background:#b0b0b0;"></div>
<!-- combo -->
<div class="a" style="left:7px;top:121px;width:199px;height:21px;box-sizing:border-box;background:#fff;border:1px solid;border-color:#808080 #fff #fff #808080;box-shadow:inset 1px 1px 0 #404040;"></div>
<div class="a" style="left:188px;top:123px;width:16px;height:17px;box-sizing:border-box;background:#f0f0f0;border:1px solid;border-color:#fff #808080 #808080 #fff;"></div>
<svg class="a" style="left:192px;top:129px" width="8" height="5"><path d="M0.5 0.5h7l-3.5 4z" fill="#000"/></svg>
<div class="lbl" style="left:11px;top:125px;">Red saturation scale</div>
<!-- info text -->
<div class="a" style="left:216px;top:119px;width:1056px;height:26px;box-sizing:border-box;background:#efefef;border:1px solid;border-color:#b4b4b4 #fff #fff #b4b4b4;"></div>
<div class="t" id="cs" style="left:218px;top:120px;font:bold 15.2px 'Liberation Sans',sans-serif;line-height:17px;letter-spacing:0.42px;">Color Space: HDTV Rec709 , White Point: D65, EOTF:&nbsp; SDR, Power law (black compensation) w/gamma = 2.40, # of measures: 0 [20:12:45]</div>
<!-- spin -->
<div class="a" style="left:1278px;top:120px;width:17px;height:12px;box-sizing:border-box;background:#f0f0f0;border:1px solid;border-color:#fff #808080 #808080 #fff;"></div>
<div class="a" style="left:1278px;top:133px;width:17px;height:12px;box-sizing:border-box;background:#f0f0f0;border:1px solid;border-color:#fff #808080 #808080 #fff;"></div>
<svg class="a" style="left:1283px;top:124px" width="7" height="4"><path d="M0 4h7l-3.5-4z" fill="#000"/></svg>
<svg class="a" style="left:1283px;top:137px" width="7" height="4"><path d="M0 0h7l-3.5 4z" fill="#000"/></svg>
<!-- sensor -->
<div class="lbl" style="left:1316px;top:117px;">Simulated sensor</div>
<div class="a" style="left:1317px;top:134px;width:67px;height:15px;background:#f0f0f0;"></div>
<div class="lbl" style="left:1318px;top:134px;">Adaptive</div>
<svg class="a" style="left:1423px;top:135px" width="14" height="14" viewBox="0 0 14 14"><path d="M1 1.2L12.8 7L1 12.8z" fill="#8ed44a" stroke="#6fb832" stroke-width="1"/></svg>
<svg class="a" style="left:1587px;top:132px" width="19" height="18" viewBox="0 0 19 18"><defs><linearGradient id="cf1587" x1="0" y1="0" x2="1" y2="1"><stop offset="0" stop-color="#fff"/><stop offset="1" stop-color="#9cd0f8"/></linearGradient></defs><path d="M1.3 2.2L11.2 0.6Q12 0.6 12 1.4V15.2L2.2 17.2Q1.4 17.2 1.4 16.4Z" fill="#1c5cc0" stroke="#16408c" stroke-width="0.7"/><path d="M12 1.4L12.9 2V15.6L12 15.2Z" fill="#303840"/><path d="M3 5L10.3 3.8V13.6L3.4 15Z" fill="url(#cf1587)"/><path d="M4.4 9.2L6.6 12.4L8.8 5.2" stroke="#d8a830" stroke-width="1.5" fill="none"/><path d="M10.8 10.2L16 8" stroke="#4890e0" stroke-width="1.6"/><path d="M11 10.9L16.4 8.6" stroke="#203860" stroke-width="0.6"/><circle cx="16.6" cy="7.5" r="1.3" fill="#d84820"/></svg>
<!-- generator -->
<div class="lbl" style="left:1623px;top:117px;">Raspberry Pi</div>
<svg class="a" style="left:1717.5px;top:133.7px" width="19" height="18" viewBox="0 0 19 18"><defs><linearGradient id="cf1717" x1="0" y1="0" x2="1" y2="1"><stop offset="0" stop-color="#fff"/><stop offset="1" stop-color="#9cd0f8"/></linearGradient></defs><path d="M1.3 2.2L11.2 0.6Q12 0.6 12 1.4V15.2L2.2 17.2Q1.4 17.2 1.4 16.4Z" fill="#1c5cc0" stroke="#16408c" stroke-width="0.7"/><path d="M12 1.4L12.9 2V15.6L12 15.2Z" fill="#303840"/><path d="M3 5L10.3 3.8V13.6L3.4 15Z" fill="url(#cf1717)"/><path d="M4.4 9.2L6.6 12.4L8.8 5.2" stroke="#d8a830" stroke-width="1.5" fill="none"/><path d="M10.8 10.2L16 8" stroke="#4890e0" stroke-width="1.6"/><path d="M11 10.9L16.4 8.6" stroke="#203860" stroke-width="0.6"/><circle cx="16.6" cy="7.5" r="1.3" fill="#d84820"/></svg>
<!-- parameters -->
<div class="a" style="left:1771px;top:117px;width:80px;height:16px;background:#f0f0f0;"></div>
<div class="a" style="left:1771px;top:135px;width:118px;height:15px;background:#efefef;"></div>
<div class="cb" style="left:1754px;top:119px;"></div>
<div class="lbl" style="left:1773px;top:118px;">Reference</div>
<div class="cb" style="left:1754px;top:136px;background:#f0f0f0;box-shadow:none;border-color:#a0a0a0 #fff #fff #a0a0a0;"></div>
<div class="lbl" style="left:1773px;top:136px;color:#a0a0a0;text-shadow:1px 1px 0 #fff;font-size:12.2px;">XYZ Adjustment</div>

<div class="a" style="left:1809px;top:158px;width:1px;height:221px;background:#9a9a9a;"></div><div class="a" style="left:1810px;top:158px;width:2px;height:221px;background:#6e6e6e;"></div>
<div class="grp" style="left:5px;top:162px;width:1804px;height:216px;box-shadow:none;border-bottom-color:#00dc00;"><div class="a" style="left:0;top:0;right:0;bottom:0;border:1px solid #00dc00;border-radius:6px 6px 0 0;"></div><div class="hd" style="height:17px;border-bottom:1px solid #00dc00;box-shadow:none;left:1px;right:1px;"><span style="left:8px;top:3px;font-size:8.85px;letter-spacing:0px;color:#303030">( Average dE: 1.53 [0.69,0.35,1.28] max: 3.44 [CIE2000] )</span></div></div>
<div class="a" id="grid" style="left:10px;top:177px;width:1779px;height:197px;background:#f0f0f0;overflow:hidden;box-sizing:border-box;border-top:1px solid #6e6e6e;border-left:1px solid #6e6e6e;">
<div class="a " style="left:0px;top:0px;width:53px;height:23px;box-sizing:border-box;border-right:1px solid #6a6a6a;border-bottom:1px solid #6a6a6a;border-top:1px solid #fff;border-left:1px solid #fff;font:bold 11.3px 'Liberation Sans',sans-serif;text-align:center;background:#f0f0f0;line-height:21px;">% Sat</div>
<div class="a " style="left:53px;top:0px;width:168px;height:23px;box-sizing:border-box;border-right:1px solid #6a6a6a;border-bottom:1px solid #6a6a6a;border-top:1px solid #fff;border-left:1px solid #fff;font:bold 11.3px 'Liberation Sans',sans-serif;text-align:center;background:rgb(241,240,240);line-height:21px;font-size:11.3px;">0</div>
<div class="a " style="left:221px;top:0px;width:168px;height:23px;box-sizing:border-box;border-right:1px solid #6a6a6a;border-bottom:1px solid #6a6a6a;border-top:1px solid #fff;border-left:1px solid #fff;font:bold 11.3px 'Liberation Sans',sans-serif;text-align:center;background:rgb(241,218,218);line-height:21px;font-size:11.3px;">10</div>
<div class="a " style="left:389px;top:0px;width:168px;height:23px;box-sizing:border-box;border-right:1px solid #6a6a6a;border-bottom:1px solid #6a6a6a;border-top:1px solid #fff;border-left:1px solid #fff;font:bold 11.3px 'Liberation Sans',sans-serif;text-align:center;background:rgb(240,195,195);line-height:21px;font-size:11.3px;">20</div>
<div class="a " style="left:557px;top:0px;width:168px;height:23px;box-sizing:border-box;border-right:1px solid #6a6a6a;border-bottom:1px solid #6a6a6a;border-top:1px solid #fff;border-left:1px solid #fff;font:bold 11.3px 'Liberation Sans',sans-serif;text-align:center;background:rgb(240,173,173);line-height:21px;font-size:11.3px;">30</div>
<div class="a " style="left:725px;top:0px;width:168px;height:23px;box-sizing:border-box;border-right:1px solid #6a6a6a;border-bottom:1px solid #6a6a6a;border-top:1px solid #fff;border-left:1px solid #fff;font:bold 11.3px 'Liberation Sans',sans-serif;text-align:center;background:rgb(239,151,151);line-height:21px;font-size:11.3px;">40</div>
<div class="a " style="left:893px;top:0px;width:144px;height:23px;box-sizing:border-box;border-right:1px solid #6a6a6a;border-bottom:1px solid #6a6a6a;border-top:1px solid #fff;border-left:1px solid #fff;font:bold 11.3px 'Liberation Sans',sans-serif;text-align:center;background:rgb(239,128,128);line-height:21px;font-size:11.3px;">50</div>
<div class="a " style="left:1037px;top:0px;width:144px;height:23px;box-sizing:border-box;border-right:1px solid #6a6a6a;border-bottom:1px solid #6a6a6a;border-top:1px solid #fff;border-left:1px solid #fff;font:bold 11.3px 'Liberation Sans',sans-serif;text-align:center;background:rgb(239,106,106);line-height:21px;font-size:11.3px;">60</div>
<div class="a " style="left:1181px;top:0px;width:144px;height:23px;box-sizing:border-box;border-right:1px solid #6a6a6a;border-bottom:1px solid #6a6a6a;border-top:1px solid #fff;border-left:1px solid #fff;font:bold 11.3px 'Liberation Sans',sans-serif;text-align:center;background:rgb(238,84,84);line-height:21px;font-size:11.3px;">70</div>
<div class="a " style="left:1325px;top:0px;width:143px;height:23px;box-sizing:border-box;border-right:1px solid #6a6a6a;border-bottom:1px solid #6a6a6a;border-top:1px solid #fff;border-left:1px solid #fff;font:bold 11.3px 'Liberation Sans',sans-serif;text-align:center;background:rgb(238,62,62);line-height:21px;font-size:11.3px;">80</div>
<div class="a " style="left:1468px;top:0px;width:143px;height:23px;box-sizing:border-box;border-right:1px solid #6a6a6a;border-bottom:1px solid #6a6a6a;border-top:1px solid #fff;border-left:1px solid #fff;font:bold 11.3px 'Liberation Sans',sans-serif;text-align:center;background:rgb(237,39,39);line-height:21px;font-size:11.3px;">90</div>
<div class="a " style="left:1611px;top:0px;width:150px;height:23px;box-sizing:border-box;border-right:1px solid #6a6a6a;border-bottom:1px solid #6a6a6a;border-top:1px solid #fff;border-left:1px solid #fff;font:bold 11.3px 'Liberation Sans',sans-serif;text-align:center;background:rgb(237,17,17);line-height:21px;font-size:11.3px;">100</div>
<div class="a " style="left:0px;top:23px;width:53px;height:25px;box-sizing:border-box;border-right:1px solid #6a6a6a;border-bottom:1px solid #6a6a6a;border-top:1px solid #fff;border-left:1px solid #fff;font:bold 11.3px 'Liberation Sans',sans-serif;text-align:center;background:#f0f0f0;line-height:22px;">x</div>
<div class="a " style="left:53px;top:23px;width:168px;height:25px;box-sizing:border-box;border-right:1px solid #c0c0c0;border-bottom:1px solid #c0c0c0;background:#fff;font:10.7px 'Liberation Sans',sans-serif;text-align:right;padding-right:1px;line-height:25px;">0.3125</div>
<div class="a " style="left:221px;top:23px;width:168px;height:25px;box-sizing:border-box;border-right:1px solid #c0c0c0;border-bottom:1px solid #c0c0c0;background:#fff;font:10.7px 'Liberation Sans',sans-serif;text-align:right;padding-right:1px;line-height:25px;">0.3518</div>
<div class="a " style="left:389px;top:23px;width:168px;height:25px;box-sizing:border-box;border-right:1px solid #c0c0c0;border-bottom:1px solid #c0c0c0;background:#fff;font:10.7px 'Liberation Sans',sans-serif;text-align:right;padding-right:1px;line-height:25px;">0.3883</div>
<div class="a " style="left:557px;top:23px;width:168px;height:25px;box-sizing:border-box;border-right:1px solid #c0c0c0;border-bottom:1px solid #c0c0c0;background:#fff;font:10.7px 'Liberation Sans',sans-serif;text-align:right;padding-right:1px;line-height:25px;">0.4265</div>
<div class="a " style="left:725px;top:23px;width:168px;height:25px;box-sizing:border-box;border-right:1px solid #c0c0c0;border-bottom:1px solid #c0c0c0;background:#fff;font:10.7px 'Liberation Sans',sans-serif;text-align:right;padding-right:1px;line-height:25px;">0.4596</div>
<div class="a " style="left:893px;top:23px;width:144px;height:25px;box-sizing:border-box;border-right:1px solid #c0c0c0;border-bottom:1px solid #c0c0c0;background:#fff;font:10.7px 'Liberation Sans',sans-serif;text-align:right;padding-right:1px;line-height:25px;">0.4974</div>
<div class="a " style="left:1037px;top:23px;width:144px;height:25px;box-sizing:border-box;border-right:1px solid #c0c0c0;border-bottom:1px solid #c0c0c0;background:#fff;font:10.7px 'Liberation Sans',sans-serif;text-align:right;padding-right:1px;line-height:25px;">0.5328</div>
<div class="a " style="left:1181px;top:23px;width:144px;height:25px;box-sizing:border-box;border-right:1px solid #c0c0c0;border-bottom:1px solid #c0c0c0;background:#fff;font:10.7px 'Liberation Sans',sans-serif;text-align:right;padding-right:1px;line-height:25px;">0.5649</div>
<div class="a " style="left:1325px;top:23px;width:143px;height:25px;box-sizing:border-box;border-right:1px solid #c0c0c0;border-bottom:1px solid #c0c0c0;background:#fff;font:10.7px 'Liberation Sans',sans-serif;text-align:right;padding-right:1px;line-height:25px;">0.5975</div>
<div class="a " style="left:1468px;top:23px;width:143px;height:25px;box-sizing:border-box;border-right:1px solid #c0c0c0;border-bottom:1px solid #c0c0c0;background:#fff;font:10.7px 'Liberation Sans',sans-serif;text-align:right;padding-right:1px;line-height:25px;">0.6250</div>
<div class="a " style="left:1611px;top:23px;width:150px;height:25px;box-sizing:border-box;border-right:1px solid #c0c0c0;border-bottom:1px solid #c0c0c0;background:#fff;font:10.7px 'Liberation Sans',sans-serif;text-align:right;padding-right:1px;line-height:25px;">0.6529</div>
<div class="a " style="left:0px;top:48px;width:53px;height:25px;box-sizing:border-box;border-right:1px solid #6a6a6a;border-bottom:1px solid #6a6a6a;border-top:1px solid #fff;border-left:1px solid #fff;font:bold 11.3px 'Liberation Sans',sans-serif;text-align:center;background:#f0f0f0;line-height:22px;">y</div>
<div class="a " style="left:53px;top:48px;width:168px;height:25px;box-sizing:border-box;border-right:1px solid #c0c0c0;border-bottom:1px solid #c0c0c0;background:#fff;font:10.7px 'Liberation Sans',sans-serif;text-align:right;padding-right:1px;line-height:25px;">0.3288</div>
<div class="a " style="left:221px;top:48px;width:168px;height:25px;box-sizing:border-box;border-right:1px solid #c0c0c0;border-bottom:1px solid #c0c0c0;background:#fff;font:10.7px 'Liberation Sans',sans-serif;text-align:right;padding-right:1px;line-height:25px;">0.3332</div>
<div class="a " style="left:389px;top:48px;width:168px;height:25px;box-sizing:border-box;border-right:1px solid #c0c0c0;border-bottom:1px solid #c0c0c0;background:#fff;font:10.7px 'Liberation Sans',sans-serif;text-align:right;padding-right:1px;line-height:25px;">0.3336</div>
<div class="a " style="left:557px;top:48px;width:168px;height:25px;box-sizing:border-box;border-right:1px solid #c0c0c0;border-bottom:1px solid #c0c0c0;background:#fff;font:10.7px 'Liberation Sans',sans-serif;text-align:right;padding-right:1px;line-height:25px;">0.3322</div>
<div class="a " style="left:725px;top:48px;width:168px;height:25px;box-sizing:border-box;border-right:1px solid #c0c0c0;border-bottom:1px solid #c0c0c0;background:#fff;font:10.7px 'Liberation Sans',sans-serif;text-align:right;padding-right:1px;line-height:25px;">0.3336</div>
<div class="a " style="left:893px;top:48px;width:144px;height:25px;box-sizing:border-box;border-right:1px solid #c0c0c0;border-bottom:1px solid #c0c0c0;background:#fff;font:10.7px 'Liberation Sans',sans-serif;text-align:right;padding-right:1px;line-height:25px;">0.3327</div>
<div class="a " style="left:1037px;top:48px;width:144px;height:25px;box-sizing:border-box;border-right:1px solid #c0c0c0;border-bottom:1px solid #c0c0c0;background:#fff;font:10.7px 'Liberation Sans',sans-serif;text-align:right;padding-right:1px;line-height:25px;">0.3329</div>
<div class="a " style="left:1181px;top:48px;width:144px;height:25px;box-sizing:border-box;border-right:1px solid #c0c0c0;border-bottom:1px solid #c0c0c0;background:#fff;font:10.7px 'Liberation Sans',sans-serif;text-align:right;padding-right:1px;line-height:25px;">0.3328</div>
<div class="a " style="left:1325px;top:48px;width:143px;height:25px;box-sizing:border-box;border-right:1px solid #c0c0c0;border-bottom:1px solid #c0c0c0;background:#fff;font:10.7px 'Liberation Sans',sans-serif;text-align:right;padding-right:1px;line-height:25px;">0.3343</div>
<div class="a " style="left:1468px;top:48px;width:143px;height:25px;box-sizing:border-box;border-right:1px solid #c0c0c0;border-bottom:1px solid #c0c0c0;background:#fff;font:10.7px 'Liberation Sans',sans-serif;text-align:right;padding-right:1px;line-height:25px;">0.3327</div>
<div class="a " style="left:1611px;top:48px;width:150px;height:25px;box-sizing:border-box;border-right:1px solid #c0c0c0;border-bottom:1px solid #c0c0c0;background:#fff;font:10.7px 'Liberation Sans',sans-serif;text-align:right;padding-right:1px;line-height:25px;">0.3315</div>
<div class="a " style="left:0px;top:73px;width:53px;height:25px;box-sizing:border-box;border-right:1px solid #6a6a6a;border-bottom:1px solid #6a6a6a;border-top:1px solid #fff;border-left:1px solid #fff;font:bold 11.3px 'Liberation Sans',sans-serif;text-align:center;background:#f0f0f0;line-height:22px;">Y</div>
<div class="a " style="left:53px;top:73px;width:168px;height:25px;box-sizing:border-box;border-right:1px solid #c0c0c0;border-bottom:1px solid #c0c0c0;background:#fff;font:10.7px 'Liberation Sans',sans-serif;text-align:right;padding-right:1px;line-height:25px;">22.808</div>
<div class="a " style="left:221px;top:73px;width:168px;height:25px;box-sizing:border-box;border-right:1px solid #c0c0c0;border-bottom:1px solid #c0c0c0;background:#fff;font:10.7px 'Liberation Sans',sans-serif;text-align:right;padding-right:1px;line-height:25px;">22.837</div>
<div class="a " style="left:389px;top:73px;width:168px;height:25px;box-sizing:border-box;border-right:1px solid #c0c0c0;border-bottom:1px solid #c0c0c0;background:#fff;font:10.7px 'Liberation Sans',sans-serif;text-align:right;padding-right:1px;line-height:25px;">23.081</div>
<div class="a " style="left:557px;top:73px;width:168px;height:25px;box-sizing:border-box;border-right:1px solid #c0c0c0;border-bottom:1px solid #c0c0c0;background:#fff;font:10.7px 'Liberation Sans',sans-serif;text-align:right;padding-right:1px;line-height:25px;">22.940</div>
<div class="a " style="left:725px;top:73px;width:168px;height:25px;box-sizing:border-box;border-right:1px solid #c0c0c0;border-bottom:1px solid #c0c0c0;background:#fff;font:10.7px 'Liberation Sans',sans-serif;text-align:right;padding-right:1px;line-height:25px;">22.861</div>
<div class="a " style="left:893px;top:73px;width:144px;height:25px;box-sizing:border-box;border-right:1px solid #c0c0c0;border-bottom:1px solid #c0c0c0;background:#fff;font:10.7px 'Liberation Sans',sans-serif;text-align:right;padding-right:1px;line-height:25px;">23.277</div>
<div class="a " style="left:1037px;top:73px;width:144px;height:25px;box-sizing:border-box;border-right:1px solid #c0c0c0;border-bottom:1px solid #c0c0c0;background:#fff;font:10.7px 'Liberation Sans',sans-serif;text-align:right;padding-right:1px;line-height:25px;">23.512</div>
<div class="a " style="left:1181px;top:73px;width:144px;height:25px;box-sizing:border-box;border-right:1px solid #c0c0c0;border-bottom:1px solid #c0c0c0;background:#fff;font:10.7px 'Liberation Sans',sans-serif;text-align:right;padding-right:1px;line-height:25px;">23.722</div>
<div class="a " style="left:1325px;top:73px;width:143px;height:25px;box-sizing:border-box;border-right:1px solid #c0c0c0;border-bottom:1px solid #c0c0c0;background:#fff;font:10.7px 'Liberation Sans',sans-serif;text-align:right;padding-right:1px;line-height:25px;">24.421</div>
<div class="a " style="left:1468px;top:73px;width:143px;height:25px;box-sizing:border-box;border-right:1px solid #c0c0c0;border-bottom:1px solid #c0c0c0;background:#fff;font:10.7px 'Liberation Sans',sans-serif;text-align:right;padding-right:1px;line-height:25px;">24.534</div>
<div class="a " style="left:1611px;top:73px;width:150px;height:25px;box-sizing:border-box;border-right:1px solid #c0c0c0;border-bottom:1px solid #c0c0c0;background:#fff;font:10.7px 'Liberation Sans',sans-serif;text-align:right;padding-right:1px;line-height:25px;">24.591</div>
<div class="a " style="left:0px;top:98px;width:53px;height:25px;box-sizing:border-box;border-right:1px solid #6a6a6a;border-bottom:1px solid #6a6a6a;border-top:1px solid #fff;border-left:1px solid #fff;font:bold 11.3px 'Liberation Sans',sans-serif;text-align:center;background:#f0f0f0;line-height:22px;">Delta E</div>
<div class="a " style="left:53px;top:98px;width:168px;height:25px;box-sizing:border-box;border-right:1px solid #c0c0c0;border-bottom:1px solid #c0c0c0;background:#aaffaa;font:10.7px 'Liberation Sans',sans-serif;text-align:right;padding-right:1px;line-height:25px;font-weight:bold;font-size:11.2px;">0.3</div>
<div class="a " style="left:221px;top:98px;width:168px;height:25px;box-sizing:border-box;border-right:1px solid #c0c0c0;border-bottom:1px solid #c0c0c0;background:#aaffaa;font:10.7px 'Liberation Sans',sans-serif;text-align:right;padding-right:1px;line-height:25px;font-weight:bold;font-size:11.2px;">1.2</div>
<div class="a " style="left:389px;top:98px;width:168px;height:25px;box-sizing:border-box;border-right:1px solid #c0c0c0;border-bottom:1px solid #c0c0c0;background:#aaffaa;font:10.7px 'Liberation Sans',sans-serif;text-align:right;padding-right:1px;line-height:25px;font-weight:bold;font-size:11.2px;">1.2</div>
<div class="a " style="left:557px;top:98px;width:168px;height:25px;box-sizing:border-box;border-right:1px solid #c0c0c0;border-bottom:1px solid #c0c0c0;background:#aaffaa;font:10.7px 'Liberation Sans',sans-serif;text-align:right;padding-right:1px;line-height:25px;font-weight:bold;font-size:11.2px;">1.1</div>
<div class="a " style="left:725px;top:98px;width:168px;height:25px;box-sizing:border-box;border-right:1px solid #c0c0c0;border-bottom:1px solid #c0c0c0;background:#aaffaa;font:10.7px 'Liberation Sans',sans-serif;text-align:right;padding-right:1px;line-height:25px;font-weight:bold;font-size:11.2px;">1.4</div>
<div class="a " style="left:893px;top:98px;width:144px;height:25px;box-sizing:border-box;border-right:1px solid #c0c0c0;border-bottom:1px solid #c0c0c0;background:#aaffaa;font:10.7px 'Liberation Sans',sans-serif;text-align:right;padding-right:1px;line-height:25px;font-weight:bold;font-size:11.2px;">1.2</div>
<div class="a " style="left:1037px;top:98px;width:144px;height:25px;box-sizing:border-box;border-right:1px solid #c0c0c0;border-bottom:1px solid #c0c0c0;background:#aaffaa;font:10.7px 'Liberation Sans',sans-serif;text-align:right;padding-right:1px;line-height:25px;font-weight:bold;font-size:11.2px;">1.3</div>
<div class="a " style="left:1181px;top:98px;width:144px;height:25px;box-sizing:border-box;border-right:1px solid #c0c0c0;border-bottom:1px solid #c0c0c0;background:#aaffaa;font:10.7px 'Liberation Sans',sans-serif;text-align:right;padding-right:1px;line-height:25px;font-weight:bold;font-size:11.2px;">1.4</div>
<div class="a " style="left:1325px;top:98px;width:143px;height:25px;box-sizing:border-box;border-right:1px solid #c0c0c0;border-bottom:1px solid #c0c0c0;background:#ffffaa;font:10.7px 'Liberation Sans',sans-serif;text-align:right;padding-right:1px;line-height:25px;font-weight:bold;font-size:11.2px;">2.1</div>
<div class="a " style="left:1468px;top:98px;width:143px;height:25px;box-sizing:border-box;border-right:1px solid #c0c0c0;border-bottom:1px solid #c0c0c0;background:#ffffaa;font:10.7px 'Liberation Sans',sans-serif;text-align:right;padding-right:1px;line-height:25px;font-weight:bold;font-size:11.2px;">2.1</div>
<div class="a " style="left:1611px;top:98px;width:150px;height:25px;box-sizing:border-box;border-right:1px solid #c0c0c0;border-bottom:1px solid #c0c0c0;background:#ffaaaa;font:10.7px 'Liberation Sans',sans-serif;text-align:right;padding-right:1px;line-height:25px;font-weight:bold;font-size:11.2px;">3.4</div>
<div class="a " style="left:0px;top:123px;width:53px;height:25px;box-sizing:border-box;border-right:1px solid #6a6a6a;border-bottom:1px solid #6a6a6a;border-top:1px solid #fff;border-left:1px solid #fff;font:bold 11.3px 'Liberation Sans',sans-serif;text-align:center;background:#f0f0f0;line-height:22px;">delta xy</div>
<div class="a " style="left:53px;top:123px;width:168px;height:25px;box-sizing:border-box;border-right:1px solid #c0c0c0;border-bottom:1px solid #c0c0c0;background:#f0f0f0;font:10.7px 'Liberation Sans',sans-serif;text-align:right;padding-right:1px;line-height:25px;">0.0003</div>
<div class="a " style="left:221px;top:123px;width:168px;height:25px;box-sizing:border-box;border-right:1px solid #c0c0c0;border-bottom:1px solid #c0c0c0;background:#f0f0f0;font:10.7px 'Liberation Sans',sans-serif;text-align:right;padding-right:1px;line-height:25px;">0.0051</div>
<div class="a " style="left:389px;top:123px;width:168px;height:25px;box-sizing:border-box;border-right:1px solid #c0c0c0;border-bottom:1px solid #c0c0c0;background:#f0f0f0;font:10.7px 'Liberation Sans',sans-serif;text-align:right;padding-right:1px;line-height:25px;">0.0066</div>
<div class="a " style="left:557px;top:123px;width:168px;height:25px;box-sizing:border-box;border-right:1px solid #c0c0c0;border-bottom:1px solid #c0c0c0;background:#f0f0f0;font:10.7px 'Liberation Sans',sans-serif;text-align:right;padding-right:1px;line-height:25px;">0.0071</div>
<div class="a " style="left:725px;top:123px;width:168px;height:25px;box-sizing:border-box;border-right:1px solid #c0c0c0;border-bottom:1px solid #c0c0c0;background:#f0f0f0;font:10.7px 'Liberation Sans',sans-serif;text-align:right;padding-right:1px;line-height:25px;">0.0070</div>
<div class="a " style="left:893px;top:123px;width:144px;height:25px;box-sizing:border-box;border-right:1px solid #c0c0c0;border-bottom:1px solid #c0c0c0;background:#f0f0f0;font:10.7px 'Liberation Sans',sans-serif;text-align:right;padding-right:1px;line-height:25px;">0.0084</div>
<div class="a " style="left:1037px;top:123px;width:144px;height:25px;box-sizing:border-box;border-right:1px solid #c0c0c0;border-bottom:1px solid #c0c0c0;background:#f0f0f0;font:10.7px 'Liberation Sans',sans-serif;text-align:right;padding-right:1px;line-height:25px;">0.0090</div>
<div class="a " style="left:1181px;top:123px;width:144px;height:25px;box-sizing:border-box;border-right:1px solid #c0c0c0;border-bottom:1px solid #c0c0c0;background:#f0f0f0;font:10.7px 'Liberation Sans',sans-serif;text-align:right;padding-right:1px;line-height:25px;">0.0085</div>
<div class="a " style="left:1325px;top:123px;width:143px;height:25px;box-sizing:border-box;border-right:1px solid #c0c0c0;border-bottom:1px solid #c0c0c0;background:#f0f0f0;font:10.7px 'Liberation Sans',sans-serif;text-align:right;padding-right:1px;line-height:25px;">0.0119</div>
<div class="a " style="left:1468px;top:123px;width:143px;height:25px;box-sizing:border-box;border-right:1px solid #c0c0c0;border-bottom:1px solid #c0c0c0;background:#f0f0f0;font:10.7px 'Liberation Sans',sans-serif;text-align:right;padding-right:1px;line-height:25px;">0.0106</div>
<div class="a " style="left:1611px;top:123px;width:150px;height:25px;box-sizing:border-box;border-right:1px solid #c0c0c0;border-bottom:1px solid #c0c0c0;background:#f0f0f0;font:10.7px 'Liberation Sans',sans-serif;text-align:right;padding-right:1px;line-height:25px;">0.0129</div>
<div class="a " style="left:0px;top:148px;width:53px;height:25px;box-sizing:border-box;border-right:1px solid #6a6a6a;border-bottom:1px solid #6a6a6a;border-top:1px solid #fff;border-left:1px solid #fff;font:bold 11.3px 'Liberation Sans',sans-serif;text-align:center;background:#f0f0f0;line-height:22px;">delta L</div>
<div class="a " style="left:53px;top:148px;width:168px;height:25px;box-sizing:border-box;border-right:1px solid #c0c0c0;border-bottom:1px solid #c0c0c0;background:#e0e0e0;font:10.7px 'Liberation Sans',sans-serif;text-align:right;padding-right:1px;line-height:25px;">-1.5 %</div>
<div class="a " style="left:221px;top:148px;width:168px;height:25px;box-sizing:border-box;border-right:1px solid #c0c0c0;border-bottom:1px solid #c0c0c0;background:#e0e0e0;font:10.7px 'Liberation Sans',sans-serif;text-align:right;padding-right:1px;line-height:25px;">-1.8 %</div>
<div class="a " style="left:389px;top:148px;width:168px;height:25px;box-sizing:border-box;border-right:1px solid #c0c0c0;border-bottom:1px solid #c0c0c0;background:#e0e0e0;font:10.7px 'Liberation Sans',sans-serif;text-align:right;padding-right:1px;line-height:25px;">-1.5 %</div>
<div class="a " style="left:557px;top:148px;width:168px;height:25px;box-sizing:border-box;border-right:1px solid #c0c0c0;border-bottom:1px solid #c0c0c0;background:#e0e0e0;font:10.7px 'Liberation Sans',sans-serif;text-align:right;padding-right:1px;line-height:25px;">-2.6 %</div>
<div class="a " style="left:725px;top:148px;width:168px;height:25px;box-sizing:border-box;border-right:1px solid #c0c0c0;border-bottom:1px solid #c0c0c0;background:#e0e0e0;font:10.7px 'Liberation Sans',sans-serif;text-align:right;padding-right:1px;line-height:25px;">-3.7 %</div>
<div class="a " style="left:893px;top:148px;width:144px;height:25px;box-sizing:border-box;border-right:1px solid #c0c0c0;border-bottom:1px solid #c0c0c0;background:#e0e0e0;font:10.7px 'Liberation Sans',sans-serif;text-align:right;padding-right:1px;line-height:25px;">-3.0 %</div>
<div class="a " style="left:1037px;top:148px;width:144px;height:25px;box-sizing:border-box;border-right:1px solid #c0c0c0;border-bottom:1px solid #c0c0c0;background:#e0e0e0;font:10.7px 'Liberation Sans',sans-serif;text-align:right;padding-right:1px;line-height:25px;">-3.1 %</div>
<div class="a " style="left:1181px;top:148px;width:144px;height:25px;box-sizing:border-box;border-right:1px solid #c0c0c0;border-bottom:1px solid #c0c0c0;background:#e0e0e0;font:10.7px 'Liberation Sans',sans-serif;text-align:right;padding-right:1px;line-height:25px;">-3.3 %</div>
<div class="a " style="left:1325px;top:148px;width:143px;height:25px;box-sizing:border-box;border-right:1px solid #c0c0c0;border-bottom:1px solid #c0c0c0;background:#e0e0e0;font:10.7px 'Liberation Sans',sans-serif;text-align:right;padding-right:1px;line-height:25px;">-2.8 %</div>
<div class="a " style="left:1468px;top:148px;width:143px;height:25px;box-sizing:border-box;border-right:1px solid #c0c0c0;border-bottom:1px solid #c0c0c0;background:#e0e0e0;font:10.7px 'Liberation Sans',sans-serif;text-align:right;padding-right:1px;line-height:25px;">-4.0 %</div>
<div class="a " style="left:1611px;top:148px;width:150px;height:25px;box-sizing:border-box;border-right:1px solid #c0c0c0;border-bottom:1px solid #c0c0c0;background:#e0e0e0;font:10.7px 'Liberation Sans',sans-serif;text-align:right;padding-right:1px;line-height:25px;">-6.4 %</div>
<div class="a " style="left:0px;top:173px;width:53px;height:4px;box-sizing:border-box;border-right:1px solid #6a6a6a;background:#f0f0f0;border-left:1px solid #fff;"></div>
<div class="a " style="left:53px;top:173px;width:168px;height:4px;box-sizing:border-box;border-right:1px solid #c0c0c0;background:#f6f6f6;"></div>
<div class="a " style="left:221px;top:173px;width:168px;height:4px;box-sizing:border-box;border-right:1px solid #c0c0c0;background:#f6f6f6;"></div>
<div class="a " style="left:389px;top:173px;width:168px;height:4px;box-sizing:border-box;border-right:1px solid #c0c0c0;background:#f6f6f6;"></div>
<div class="a " style="left:557px;top:173px;width:168px;height:4px;box-sizing:border-box;border-right:1px solid #c0c0c0;background:#f6f6f6;"></div>
<div class="a " style="left:725px;top:173px;width:168px;height:4px;box-sizing:border-box;border-right:1px solid #c0c0c0;background:#f6f6f6;"></div>
<div class="a " style="left:893px;top:173px;width:144px;height:4px;box-sizing:border-box;border-right:1px solid #c0c0c0;background:#f6f6f6;"></div>
<div class="a " style="left:1037px;top:173px;width:144px;height:4px;box-sizing:border-box;border-right:1px solid #c0c0c0;background:#f6f6f6;"></div>
<div class="a " style="left:1181px;top:173px;width:144px;height:4px;box-sizing:border-box;border-right:1px solid #c0c0c0;background:#f6f6f6;"></div>
<div class="a " style="left:1325px;top:173px;width:143px;height:4px;box-sizing:border-box;border-right:1px solid #c0c0c0;background:#f6f6f6;"></div>
<div class="a " style="left:1468px;top:173px;width:143px;height:4px;box-sizing:border-box;border-right:1px solid #c0c0c0;background:#f6f6f6;"></div>
<div class="a " style="left:1611px;top:173px;width:150px;height:4px;box-sizing:border-box;border-right:1px solid #c0c0c0;background:#f6f6f6;"></div>
<div class="a " style="left:1768px;top:19px;width:2px;height:154px;background:#808080;border-radius:1px;"></div>
<svg class="a" style="left:3px;top:181px" width="8" height="10"><path d="M7 0.5v9l-6.5-4.5z" fill="#8c8c8c"/></svg>
<svg class="a" style="left:1748px;top:181px" width="8" height="10"><path d="M1 0.5v9l6.5-4.5z" fill="#8c8c8c"/></svg>
</div>
<div class="a" style="left:10px;top:374px;width:1780px;height:2px;background:#fff;"></div><div class="a" style="left:1789px;top:177px;width:1px;height:198px;background:#fff;"></div>
<div class="grp" style="left:1815px;top:162px;width:80px;height:99px;"><div class="hd"><span>Display</span></div></div>
<div class="a" style="left:1822px;top:181px;width:66px;height:15px;background:#f0f0f0;"></div>
<div class="rd" style="left:1823px;top:181px;background:#f0f0f0;box-shadow:none;"></div>
<div class="lbl" style="left:1841px;top:181px;color:#a0a0a0;text-shadow:1px 1px 0 #fff;">Sensor</div>
<div class="a" style="left:1822px;top:197px;width:66px;height:15px;background:#f0f0f0;"></div>
<div class="rd" style="left:1823px;top:197px;"></div>
<div class="lbl" style="left:1841px;top:197px;">RGB</div>
<div class="a" style="left:1822px;top:213px;width:66px;height:15px;background:#f0f0f0;"></div>
<div class="rd" style="left:1823px;top:213px;"></div>
<div class="lbl" style="left:1841px;top:213px;">XYZ</div>
<div class="a" style="left:1822px;top:229px;width:66px;height:15px;background:#f0f0f0;"></div>
<div class="rd" style="left:1823px;top:229px;"></div>
<div class="lbl" style="left:1841px;top:229px;">xyz</div>
<div class="a" style="left:1822px;top:245px;width:66px;height:15px;background:#f0f0f0;"></div>
<div class="rd" style="left:1823px;top:245px;"></div>
<div class="a" style="left:1827px;top:249px;width:4px;height:4px;border-radius:50%;background:#000;"></div>
<div class="lbl" style="left:1841px;top:245px;">xyY</div>
<div class="a" style="left:1812px;top:262px;width:84px;height:2px;background:#6e6e6e;"></div>
<div class="a" style="left:1812px;top:354px;width:84px;height:25px;background:#8a8a8a;"></div>
<div class="a" style="left:1812px;top:264px;width:83px;height:30px;box-sizing:border-box;background:#ececec;border:1px solid;border-color:#fff #b4b4b4 #c8c8c8 #fff;"></div>
<div class="a" style="left:1812px;top:294px;width:83px;height:30px;box-sizing:border-box;background:#ececec;border:1px solid;border-color:#fff #b4b4b4 #c8c8c8 #fff;"></div>
<div class="a" style="left:1812px;top:324px;width:83px;height:30px;box-sizing:border-box;background:#ececec;border:1px solid;border-color:#fff #b4b4b4 #c8c8c8 #fff;"></div>
<div class="lbl" style="left:1863px;top:274px;font-size:12px;">Go</div>
<div class="lbl" style="left:1851px;top:303px;font-size:12px;">Delete</div>
<div class="lbl" style="left:1858px;top:333px;font-size:12px;">Refs</div>
<svg class="a" style="left:1817px;top:266px" width="34" height="28" viewBox="0 0 34 28"><path d="M2 1.5H14V26H2Z" fill="#b4b4b4"/><path d="M19 4H32V27.5H19Z" fill="#b4b4b4"/><path d="M1.8 1V26.5M32.3 4V27.5" stroke="#000" stroke-width="1.2" stroke-dasharray="1.2 1"/><path d="M2 4.5h6q2 0 2 1.8t-2 1.8h-3v1.6h3.4q2 0 2 1.8t-2 1.8H5v1.8h3.4q2 0 2 1.8t-2 1.8H5v2" fill="none" stroke="#e8e8e8" stroke-width="1.3"/><path d="M32 9h-5q-2 0-2 1.6t2 1.6h2.4v1.6H27q-2 0-2 1.6t2 1.6h2.4v2" fill="none" stroke="#e0e0e0" stroke-width="1.3"/><path d="M7 0.5H20.5Q21.5 12 24.5 17Q27 20.5 31.5 21.5L27.5 27.5H13Q11 20 10.8 13Q10.5 5.5 7 0.5Z" fill="#e81424" stroke="#40060a" stroke-width="0.9"/><path d="M9.8 1Q13.6 6 13.6 13.5Q13.8 20.5 15.8 27.2M20 1Q20.6 11.5 23.4 17.2Q26 21.2 30.6 22.6" fill="none" stroke="#50080c" stroke-width="1.6" stroke-dasharray="1.1 1"/><path d="M13 7.5L20.3 4.5M13.8 16L22.5 14M15 24L25.2 19.5" stroke="#50080c" stroke-width="1"/></svg>
<svg class="a" style="left:1818px;top:295px" width="31" height="28" viewBox="0 0 31 28"><defs><linearGradient id="rb1" x1="0" y1="0" x2="1" y2="1"><stop offset="0" stop-color="#e8fbff"/><stop offset="0.5" stop-color="#a8dcf8"/><stop offset="1" stop-color="#58a8e8"/></linearGradient></defs><path d="M1.5 5.5Q14 2.5 28.5 1L27.2 21.5Q18 27 6.5 26.5Z" fill="url(#rb1)" stroke="#c8e8f8" stroke-width="0.8"/><path d="M1.5 5.5Q14 2.5 28.5 1Q20 5 12 5.5Q6 6 1.5 5.5Z" fill="#78b8f0" opacity="0.8"/><ellipse cx="15" cy="22" rx="9.5" ry="3.4" fill="#8cc8f4" stroke="#b8e0fa" stroke-width="0.7" transform="rotate(-8 15 22)"/><path d="M14.2 13.2Q14.6 9.2 19 9V7.2L23.2 10.2L19 12.8V11.2Q16.8 11.2 16.4 13.4Z M23.6 14.6Q23.2 18.8 18.8 19.2V21L14.4 17.8L18.8 15.2V16.9Q21 16.8 21.4 14.4Z" fill="#28a838" stroke="#147820" stroke-width="0.5"/></svg>
<svg class="a" style="left:1817px;top:328px" width="34" height="24" viewBox="0 0 34 24"><path d="M1 23V10.5L3 9.5L4 7.5L6 6.5L7.2 3H8.2L9.5 6L11.5 8.5L13 10L16 9.5L17 6L19 1.5H20.5L22 3L23.5 5L24.5 8L26.5 10L29 8L31 9L33 10.5V23Z" fill="#ffff00"/><path d="M1 23V11L2.6 10V23Z" fill="#000080"/><path d="M2.6 23V9.8L4.4 8V23Z" fill="#ff00ff"/><path d="M4.4 23V8L6.4 7.2L7.4 4.2H8L9.3 7.4V23Z" fill="#0000ff"/><path d="M9.3 23V7.4L11.4 9.5L12.6 11V23Z" fill="#00ffff"/><path d="M12.6 23V11L16 10.5L16.6 9V23Z" fill="#00ff00"/><path d="M22 23V4.2L23.2 6L24.4 9L25.6 10.6V23Z" fill="#800000"/><path d="M25.6 23V11L26.6 11.2L29 9.2L31 10L33 11.6V23Z" fill="#ff0000"/></svg>
<div class="a" style="left:1818px;top:358px;width:56px;height:18px;background:#f0f0f0;"></div>
<div class="cb" style="left:1819px;top:360px;width:12px;height:12px;"></div>
<div class="lbl" style="left:1837px;top:359.5px;font-size:12px;">Edit</div>
<div class="grp" style="left:5px;top:387px;width:378px;height:629px;"><div class="hd"><span>Selected color</span></div></div>
<div class="a" style="left:17px;top:408px;width:111px;height:15px;background:#f0f0f0;"></div>
<div class="lbl" style="left:18px;top:410px;font-size:12.2px;">RGB Levels</div>
<div class="a" style="left:230px;top:407px;width:128px;height:14px;background:#f0f0f0;"></div>
<div class="lbl" style="left:241px;top:407px;">Current Measure</div>
<div class="a" style="left:14px;top:433px;width:200px;height:86px;background:#f0f0f0;overflow:hidden;"><svg class="a" style="left:0;top:0" width="200" height="86" viewBox="0 0 200 86"><path d="M0 44.5H200" stroke="#808080" stroke-width="1" stroke-dasharray="3 2"/><path d="M0 82 Q25 70 50 82Z" fill="#a80000" stroke="#000" stroke-width="1.4"/><path d="M50 82 Q76 70 101 82Z" fill="#00a000" stroke="#000" stroke-width="1.4"/><path d="M101 82 Q127 70 152 82Z" fill="#0000c0" stroke="#000" stroke-width="1.4"/><path d="M152 82 Q178 70 203 82Z" fill="#c08800" stroke="#000" stroke-width="1.4"/><rect x="0" y="81" width="200" height="5" fill="#000"/></svg></div>
<div class="t sf" style="left:8.5px;width:60px;text-align:center;top:496px;font:bold 11.5px 'Liberation Serif',serif;line-height:12px;">0.0%</div>
<div class="t sf" style="left:59.5px;width:60px;text-align:center;top:496px;font:bold 11.5px 'Liberation Serif',serif;line-height:12px;">0.0%</div>
<div class="t sf" style="left:110.5px;width:60px;text-align:center;top:496px;font:bold 11.5px 'Liberation Serif',serif;line-height:12px;">0.0%</div>
<div class="t sf" style="left:162px;width:60px;text-align:center;top:496px;font:bold 11.5px 'Liberation Serif',serif;line-height:12px;word-spacing:2px;">dE 0.0</div>
<div class="a" style="left:16px;top:533px;width:192px;height:73px;background:#f0f0f0;"></div>
<div class="t dv" style="left:35px;top:535px;font:bold 11.6px 'DejaVu Sans',sans-serif;line-height:14px;">Measure</div>
<div class="t dv" style="left:127px;top:535px;font:bold 11.4px 'DejaVu Sans',sans-serif;line-height:14px;">Reference</div>
<div class="a" style="left:17px;top:621px;width:42px;height:16px;background:#f0f0f0;"></div>
<div class="lbl" style="left:18px;top:622px;">Target</div>
<div class="a" style="left:50px;top:638px;width:116px;height:89px;box-sizing:border-box;border:1px solid #000;border-bottom:none;background:conic-gradient(from 0deg at 50% 50%,#40ff00 0deg,#a0e800 30deg,#ffc800 50deg,#ff5000 68deg,#ff0000 90deg,#ff0070 125deg,#c000a0 150deg,#8000d0 180deg,#3000f0 210deg,#0000ff 232deg,#0070c0 262deg,#0098a8 285deg,#00ff80 310deg,#20ff40 340deg,#40ff00 360deg);"></div>
<svg class="a" style="left:50px;top:638px" width="116" height="89" viewBox="0 0 116 89"><rect x="17.5" y="13.5" width="81" height="62" rx="7" fill="#000" stroke="#fff" stroke-width="1"/><path d="M15 44.5H102" stroke="#000" stroke-width="1"/><path d="M17 44.5H100" stroke="#fff" stroke-width="1" stroke-dasharray="3 2"/><path d="M58.5 14V76" stroke="#fff" stroke-width="1" stroke-dasharray="3 2"/><ellipse cx="58.5" cy="44.5" rx="21" ry="15.5" fill="none" stroke="#fff" stroke-width="1" stroke-dasharray="3 3"/></svg>
<div class="a" style="left:221px;top:430px;width:152px;height:577px;box-sizing:border-box;background:#f0f0f0;border:1px solid;border-color:#808080 #fff #fff #808080;"></div>
<div class="a" style="left:222px;top:431px;width:133px;height:575px;box-sizing:border-box;background:#a0a0a0;border-top:1px solid #404040;border-left:1px solid #404040;"></div>
<div class="a" style="left:223px;top:432px;width:55px;height:23px;box-sizing:border-box;background:#f0f0f0;border:1px solid;border-color:#fff #555 #555 #fff;font:bold 11.6px 'Liberation Sans',sans-serif;text-align:center;line-height:21px;white-space:nowrap;">Y cd/m<sup style="font-size:7px;line-height:0;vertical-align:5px">2</sup></div>
<div class="a" style="left:278px;top:432px;width:77px;height:23px;box-sizing:border-box;background:#fff;border-right:1px solid #c0c0c0;border-bottom:1px solid #c0c0c0;"></div>
<div class="a" style="left:223px;top:455px;width:55px;height:23px;box-sizing:border-box;background:#f0f0f0;border:1px solid;border-color:#fff #555 #555 #fff;font:bold 11.6px 'Liberation Sans',sans-serif;text-align:center;line-height:21px;white-space:nowrap;">Y ftL</div>
<div class="a" style="left:278px;top:455px;width:77px;height:23px;box-sizing:border-box;background:#fff;border-right:1px solid #c0c0c0;border-bottom:1px solid #c0c0c0;"></div>
<div class="a" style="left:223px;top:478px;width:55px;height:23px;box-sizing:border-box;background:#f0f0f0;border:1px solid;border-color:#fff #555 #555 #fff;font:bold 11.6px 'Liberation Sans',sans-serif;text-align:center;line-height:21px;white-space:nowrap;">T°</div>
<div class="a" style="left:278px;top:478px;width:77px;height:23px;box-sizing:border-box;background:#fff;border-right:1px solid #c0c0c0;border-bottom:1px solid #c0c0c0;"></div>
<div class="a" style="left:223px;top:501px;width:55px;height:23px;box-sizing:border-box;background:#f0f0f0;border:1px solid;border-color:#fff #555 #555 #fff;font:bold 11.6px 'Liberation Sans',sans-serif;text-align:center;line-height:21px;white-space:nowrap;">X</div>
<div class="a" style="left:278px;top:501px;width:77px;height:23px;box-sizing:border-box;background:#e0e0e0;border-right:1px solid #c0c0c0;border-bottom:1px solid #c0c0c0;"></div>
<div class="a" style="left:223px;top:524px;width:55px;height:23px;box-sizing:border-box;background:#f0f0f0;border:1px solid;border-color:#fff #555 #555 #fff;font:bold 11.6px 'Liberation Sans',sans-serif;text-align:center;line-height:21px;white-space:nowrap;">Y</div>
<div class="a" style="left:278px;top:524px;width:77px;height:23px;box-sizing:border-box;background:#e0e0e0;border-right:1px solid #c0c0c0;border-bottom:1px solid #c0c0c0;"></div>
<div class="a" style="left:223px;top:547px;width:55px;height:23px;box-sizing:border-box;background:#f0f0f0;border:1px solid;border-color:#fff #555 #555 #fff;font:bold 11.6px 'Liberation Sans',sans-serif;text-align:center;line-height:21px;white-space:nowrap;">Z</div>
<div class="a" style="left:278px;top:547px;width:77px;height:23px;box-sizing:border-box;background:#e0e0e0;border-right:1px solid #c0c0c0;border-bottom:1px solid #c0c0c0;"></div>
<div class="a" style="left:223px;top:570px;width:55px;height:23px;box-sizing:border-box;background:#f0f0f0;border:1px solid;border-color:#fff #555 #555 #fff;font:bold 11.6px 'Liberation Sans',sans-serif;text-align:center;line-height:21px;white-space:nowrap;">R</div>
<div class="a" style="left:278px;top:570px;width:77px;height:23px;box-sizing:border-box;background:#fff;border-right:1px solid #c0c0c0;border-bottom:1px solid #c0c0c0;"></div>
<div class="a" style="left:223px;top:593px;width:55px;height:23px;box-sizing:border-box;background:#f0f0f0;border:1px solid;border-color:#fff #555 #555 #fff;font:bold 11.6px 'Liberation Sans',sans-serif;text-align:center;line-height:21px;white-space:nowrap;">G</div>
<div class="a" style="left:278px;top:593px;width:77px;height:23px;box-sizing:border-box;background:#fff;border-right:1px solid #c0c0c0;border-bottom:1px solid #c0c0c0;"></div>
<div class="a" style="left:223px;top:616px;width:55px;height:23px;box-sizing:border-box;background:#f0f0f0;border:1px solid;border-color:#fff #555 #555 #fff;font:bold 11.6px 'Liberation Sans',sans-serif;text-align:center;line-height:21px;white-space:nowrap;">B</div>
<div class="a" style="left:278px;top:616px;width:77px;height:23px;box-sizing:border-box;background:#fff;border-right:1px solid #c0c0c0;border-bottom:1px solid #c0c0c0;"></div>
<div class="a" style="left:223px;top:639px;width:55px;height:23px;box-sizing:border-box;background:#f0f0f0;border:1px solid;border-color:#fff #555 #555 #fff;font:bold 11.6px 'Liberation Sans',sans-serif;text-align:center;line-height:21px;white-space:nowrap;">x</div>
<div class="a" style="left:278px;top:639px;width:77px;height:23px;box-sizing:border-box;background:#e0e0e0;border-right:1px solid #c0c0c0;border-bottom:1px solid #c0c0c0;"></div>
<div class="a" style="left:223px;top:662px;width:55px;height:23px;box-sizing:border-box;background:#f0f0f0;border:1px solid;border-color:#fff #555 #555 #fff;font:bold 11.6px 'Liberation Sans',sans-serif;text-align:center;line-height:21px;white-space:nowrap;">y</div>
<div class="a" style="left:278px;top:662px;width:77px;height:23px;box-sizing:border-box;background:#e0e0e0;border-right:1px solid #c0c0c0;border-bottom:1px solid #c0c0c0;"></div>
<div class="a" style="left:223px;top:685px;width:55px;height:23px;box-sizing:border-box;background:#f0f0f0;border:1px solid;border-color:#fff #555 #555 #fff;font:bold 11.6px 'Liberation Sans',sans-serif;text-align:center;line-height:21px;white-space:nowrap;">Y</div>
<div class="a" style="left:278px;top:685px;width:77px;height:23px;box-sizing:border-box;background:#e0e0e0;border-right:1px solid #c0c0c0;border-bottom:1px solid #c0c0c0;"></div>
<div class="a" style="left:223px;top:708px;width:55px;height:23px;box-sizing:border-box;background:#f0f0f0;border:1px solid;border-color:#fff #555 #555 #fff;font:bold 11.6px 'Liberation Sans',sans-serif;text-align:center;line-height:21px;white-space:nowrap;">x</div>
<div class="a" style="left:278px;top:708px;width:77px;height:23px;box-sizing:border-box;background:#fff;border-right:1px solid #c0c0c0;border-bottom:1px solid #c0c0c0;"></div>
<div class="a" style="left:223px;top:731px;width:55px;height:23px;box-sizing:border-box;background:#f0f0f0;border:1px solid;border-color:#fff #555 #555 #fff;font:bold 11.6px 'Liberation Sans',sans-serif;text-align:center;line-height:21px;white-space:nowrap;">y</div>
<div class="a" style="left:278px;top:731px;width:77px;height:23px;box-sizing:border-box;background:#fff;border-right:1px solid #c0c0c0;border-bottom:1px solid #c0c0c0;"></div>
<div class="a" style="left:223px;top:754px;width:55px;height:23px;box-sizing:border-box;background:#f0f0f0;border:1px solid;border-color:#fff #555 #555 #fff;font:bold 11.6px 'Liberation Sans',sans-serif;text-align:center;line-height:21px;white-space:nowrap;">z</div>
<div class="a" style="left:278px;top:754px;width:77px;height:23px;box-sizing:border-box;background:#fff;border-right:1px solid #c0c0c0;border-bottom:1px solid #c0c0c0;"></div>
<div class="a" style="left:223px;top:777px;width:55px;height:23px;box-sizing:border-box;background:#f0f0f0;border:1px solid;border-color:#fff #555 #555 #fff;font:bold 11.6px 'Liberation Sans',sans-serif;text-align:center;line-height:21px;white-space:nowrap;">L</div>
<div class="a" style="left:278px;top:777px;width:77px;height:23px;box-sizing:border-box;background:#e0e0e0;border-right:1px solid #c0c0c0;border-bottom:1px solid #c0c0c0;"></div>
<div class="a" style="left:223px;top:800px;width:55px;height:23px;box-sizing:border-box;background:#f0f0f0;border:1px solid;border-color:#fff #555 #555 #fff;font:bold 11.6px 'Liberation Sans',sans-serif;text-align:center;line-height:21px;white-space:nowrap;">a</div>
<div class="a" style="left:278px;top:800px;width:77px;height:23px;box-sizing:border-box;background:#e0e0e0;border-right:1px solid #c0c0c0;border-bottom:1px solid #c0c0c0;"></div>
<div class="a" style="left:223px;top:823px;width:55px;height:23px;box-sizing:border-box;background:#f0f0f0;border:1px solid;border-color:#fff #555 #555 #fff;font:bold 11.6px 'Liberation Sans',sans-serif;text-align:center;line-height:21px;white-space:nowrap;">b</div>
<div class="a" style="left:278px;top:823px;width:77px;height:23px;box-sizing:border-box;background:#e0e0e0;border-right:1px solid #c0c0c0;border-bottom:1px solid #c0c0c0;"></div>
<div class="a" style="left:223px;top:846px;width:55px;height:23px;box-sizing:border-box;background:#f0f0f0;border:1px solid;border-color:#fff #555 #555 #fff;font:bold 11.6px 'Liberation Sans',sans-serif;text-align:center;line-height:21px;white-space:nowrap;">L</div>
<div class="a" style="left:278px;top:846px;width:77px;height:23px;box-sizing:border-box;background:#fff;border-right:1px solid #c0c0c0;border-bottom:1px solid #c0c0c0;"></div>
<div class="a" style="left:223px;top:869px;width:55px;height:23px;box-sizing:border-box;background:#f0f0f0;border:1px solid;border-color:#fff #555 #555 #fff;font:bold 11.6px 'Liberation Sans',sans-serif;text-align:center;line-height:21px;white-space:nowrap;">C</div>
<div class="a" style="left:278px;top:869px;width:77px;height:23px;box-sizing:border-box;background:#fff;border-right:1px solid #c0c0c0;border-bottom:1px solid #c0c0c0;"></div>
<div class="a" style="left:223px;top:892px;width:55px;height:23px;box-sizing:border-box;background:#f0f0f0;border:1px solid;border-color:#fff #555 #555 #fff;font:bold 11.6px 'Liberation Sans',sans-serif;text-align:center;line-height:21px;white-space:nowrap;">H</div>
<div class="a" style="left:278px;top:892px;width:77px;height:23px;box-sizing:border-box;background:#fff;border-right:1px solid #c0c0c0;border-bottom:1px solid #c0c0c0;"></div>
<div class="a" style="left:223px;top:915px;width:55px;height:23px;box-sizing:border-box;background:#f0f0f0;border:1px solid;border-color:#fff #555 #555 #fff;font:bold 11.6px 'Liberation Sans',sans-serif;text-align:center;line-height:21px;white-space:nowrap;">L</div>
<div class="a" style="left:278px;top:915px;width:77px;height:23px;box-sizing:border-box;background:#e0e0e0;border-right:1px solid #c0c0c0;border-bottom:1px solid #c0c0c0;"></div>
<div class="a" style="left:223px;top:938px;width:55px;height:23px;box-sizing:border-box;background:#f0f0f0;border:1px solid;border-color:#fff #555 #555 #fff;font:bold 11.6px 'Liberation Sans',sans-serif;text-align:center;line-height:21px;white-space:nowrap;">M</div>
<div class="a" style="left:278px;top:938px;width:77px;height:23px;box-sizing:border-box;background:#e0e0e0;border-right:1px solid #c0c0c0;border-bottom:1px solid #c0c0c0;"></div>
<div class="a" style="left:223px;top:961px;width:55px;height:23px;box-sizing:border-box;background:#f0f0f0;border:1px solid;border-color:#fff #555 #555 #fff;font:bold 11.6px 'Liberation Sans',sans-serif;text-align:center;line-height:21px;white-space:nowrap;">S</div>
<div class="a" style="left:278px;top:961px;width:77px;height:23px;box-sizing:border-box;background:#e0e0e0;border-right:1px solid #c0c0c0;border-bottom:1px solid #c0c0c0;"></div>
<svg class="a" style="left:359px;top:437px" width="10" height="7"><path d="M0.5 6.5h9l-4.5-6z" fill="#a0a0a0"/></svg>
<svg class="a" style="left:359px;top:995px" width="10" height="7"><path d="M0.5 0.5h9l-4.5 6z" fill="#a0a0a0"/></svg>
<div class="grp" style="left:391px;top:387px;width:1504px;height:629px;"><div class="hd"><span>Information</span></div></div>
<div class="a" style="left:396px;top:409px;width:301px;height:22px;box-sizing:border-box;background:#fff;border:1px solid;border-color:#808080 #fff #fff #808080;box-shadow:inset 1px 1px 0 #404040;"></div>
<div class="a" style="left:679px;top:411px;width:16px;height:18px;box-sizing:border-box;background:#f0f0f0;border:1px solid;border-color:#fff #808080 #808080 #fff;"></div>
<svg class="a" style="left:683px;top:418px" width="8" height="5"><path d="M0.5 0.5h7l-3.5 4z" fill="#000"/></svg>
<div class="lbl" style="left:401px;top:415px;font-size:12.1px;">Luminance - Gamma</div>
<div class="a" style="left:398px;top:439px;width:748px;height:569px;box-sizing:border-box;border:2px solid;border-color:#a0a0a0 #fff #fff #a0a0a0;"></div>
<div class="a" style="left:400px;top:441px;width:744px;height:565px;box-sizing:border-box;border:2px solid;border-color:#696969 #f2f2f2 #f2f2f2 #696969;"></div>
<div class="a" style="left:402px;top:443px;width:740px;height:562px;overflow:hidden;background:linear-gradient(90deg,#202020 0%,#ffffff 100%);">
<svg class="a" style="left:0;top:0" width="740" height="562" viewBox="0 0 740 562"><g stroke="#0b4444" stroke-width="1.3" fill="none"><path d="M0.5 0V562"/><path d="M74.5 0V562"/><path d="M148.5 0V562"/><path d="M222.5 0V562"/><path d="M296.5 0V562"/><path d="M370.5 0V562"/><path d="M444.5 0V562"/><path d="M518.5 0V562"/><path d="M592.5 0V562"/><path d="M666.5 0V562"/><path d="M0 475.4H740"/><path d="M0 389.0H740"/><path d="M0 302.6H740"/><path d="M0 216.2H740"/><path d="M0 129.8H740"/><path d="M0 43.4H740"/></g><path d="M0.5 560.5 L37.5 560.1 L74.5 558.1 L111.5 554.9 L148.5 549.9 L185.5 541.8 L222.5 530.9 L259.5 517.3 L296.5 500.9 L333.5 481.6 L370.5 459.0 L407.5 433.9 L444.5 405.7 L481.5 372.1 L518.5 335.1 L555.5 294.3 L592.5 249.5 L629.5 200.6 L666.5 147.5 L703.5 90.1 L740.5 28.3" stroke="#ffff00" stroke-width="2" fill="none"/><g fill="#e2e2e2"><rect x="-3.5" y="556.5" width="8" height="8"/><rect x="33.5" y="556.1" width="8" height="8"/><rect x="70.5" y="554.1" width="8" height="8"/><rect x="107.5" y="550.9" width="8" height="8"/><rect x="144.5" y="545.9" width="8" height="8"/><rect x="181.5" y="537.8" width="8" height="8"/><rect x="218.5" y="526.9" width="8" height="8"/><rect x="255.5" y="513.3" width="8" height="8"/><rect x="292.5" y="496.9" width="8" height="8"/><rect x="329.5" y="477.6" width="8" height="8"/><rect x="366.5" y="455.0" width="8" height="8"/><rect x="403.5" y="429.9" width="8" height="8"/><rect x="440.5" y="401.7" width="8" height="8"/><rect x="477.5" y="368.1" width="8" height="8"/><rect x="514.5" y="331.1" width="8" height="8"/><rect x="551.5" y="290.3" width="8" height="8"/><rect x="588.5" y="245.5" width="8" height="8"/><rect x="625.5" y="196.6" width="8" height="8"/><rect x="662.5" y="143.5" width="8" height="8"/><rect x="699.5" y="86.1" width="8" height="8"/><rect x="736.5" y="24.3" width="8" height="8"/></g></svg>
<div class="t sf" style="left:2.5px;top:459.9px;font-size:13.3px;letter-spacing:0.3px;line-height:14px;color:#cfcfcf;">20 cd m-2</div>
<div class="t sf" style="left:2.5px;top:373.5px;font-size:13.3px;letter-spacing:0.3px;line-height:14px;color:#cfcfcf;">40 cd m-2</div>
<div class="t sf" style="left:2.5px;top:287.1px;font-size:13.3px;letter-spacing:0.3px;line-height:14px;color:#cfcfcf;">60 cd m-2</div>
<div class="t sf" style="left:2.5px;top:200.7px;font-size:13.3px;letter-spacing:0.3px;line-height:14px;color:#cfcfcf;">80 cd m-2</div>
<div class="t sf" style="left:2.5px;top:114.3px;font-size:13.3px;letter-spacing:0.3px;line-height:14px;color:#cfcfcf;">100 cd m-2</div>
<div class="t sf" style="left:2.5px;top:27.9px;font-size:13.3px;letter-spacing:0.3px;line-height:14px;color:#cfcfcf;">120 cd m-2</div>
<div class="t sf" style="left:77.0px;top:547px;font-size:13.2px;letter-spacing:0.25px;line-height:14px;color:#e6e6e6;">10% White</div>
<div class="t sf" style="left:151.0px;top:547px;font-size:13.2px;letter-spacing:0.25px;line-height:14px;color:#d6d6d6;">20% White</div>
<div class="t sf" style="left:225.0px;top:547px;font-size:13.2px;letter-spacing:0.25px;line-height:14px;color:#c2c2c2;">30% White</div>
<div class="t sf" style="left:299.0px;top:547px;font-size:13.2px;letter-spacing:0.25px;line-height:14px;color:#a8a8a8;">40% White</div>
<div class="t sf" style="left:373.0px;top:547px;font-size:13.2px;letter-spacing:0.25px;line-height:14px;color:#a6a6a6;">50% White</div>
<div class="t sf" style="left:447.0px;top:547px;font-size:13.2px;letter-spacing:0.25px;line-height:14px;color:#7e7e7e;">60% White</div>
<div class="t sf" style="left:521.0px;top:547px;font-size:13.2px;letter-spacing:0.25px;line-height:14px;color:#5c5c5c;">70% White</div>
<div class="t sf" style="left:595.0px;top:547px;font-size:13.2px;letter-spacing:0.25px;line-height:14px;color:#3c3c3c;">80% White</div>
<div class="t sf" style="left:669.0px;top:547px;font-size:13.2px;letter-spacing:0.25px;line-height:14px;color:#202020;">90% White</div>
<div class="t" style="left:283px;width:200px;text-align:center;top:1px;font:bold 14.8px 'Liberation Sans',sans-serif;line-height:16px;color:#d6d61c;">Luminance Response</div>
<div class="t" style="left:575px;top:507px;font:bold 16px 'Liberation Sans',sans-serif;line-height:16px;color:#8c8c8c;">hcfr.sourceforge.net</div>
</div>
<div class="a" style="left:1146px;top:439px;width:748px;height:569px;box-sizing:border-box;border:2px solid;border-color:#a0a0a0 #fff #fff #a0a0a0;"></div>
<div class="a" style="left:1148px;top:441px;width:744px;height:565px;box-sizing:border-box;border:2px solid;border-color:#696969 #f2f2f2 #f2f2f2 #696969;"></div>
<div class="a" style="left:1150px;top:443px;width:740px;height:562px;overflow:hidden;background:linear-gradient(90deg,#202020 0%,#ffffff 100%);">
<svg class="a" style="left:0;top:0" width="740" height="562" viewBox="0 0 740 562"><g stroke="#0b4444" stroke-width="1.3" fill="none"><path d="M0.5 0V562"/><path d="M74.3 0V562"/><path d="M148.3 0V562"/><path d="M222.3 0V562"/><path d="M296.3 0V562"/><path d="M370.3 0V562"/><path d="M444.3 0V562"/><path d="M518.3 0V562"/><path d="M592.3 0V562"/><path d="M666.3 0V562"/><path d="M0 533.2H740"/><path d="M0 505.1H740"/><path d="M0 477.1H740"/><path d="M0 449.0H740"/><path d="M0 421.0H740"/><path d="M0 393.0H740"/><path d="M0 364.9H740"/><path d="M0 336.8H740"/><path d="M0 308.8H740"/><path d="M0 280.8H740"/><path d="M0 252.7H740"/><path d="M0 224.6H740"/><path d="M0 196.6H740"/><path d="M0 168.5H740"/><path d="M0 140.5H740"/><path d="M0 112.4H740"/><path d="M0 84.4H740"/><path d="M0 56.4H740"/><path d="M0 28.3H740"/></g><path d="M37.3 177.1 L74.3 172.2 L111.3 171.0 L148.3 171.0 L185.3 168.2 L222.3 168.8 L259.3 169.0 L296.3 168.6 L333.3 167.6 L370.3 167.6 L407.3 168.6 L444.3 168.8 L481.3 168.8 L518.3 169.2 L555.3 169.8 L592.3 170.4 L629.3 171.2 L666.3 173.6 L703.3 171.2" stroke="#ffff00" stroke-width="2" fill="none"/><g fill="#ffff00"><rect x="33.3" y="173.1" width="8" height="8"/><rect x="70.3" y="168.2" width="8" height="8"/><rect x="107.3" y="167.0" width="8" height="8"/><rect x="144.3" y="167.0" width="8" height="8"/><rect x="181.3" y="164.2" width="8" height="8"/><rect x="218.3" y="164.8" width="8" height="8"/><rect x="255.3" y="165.0" width="8" height="8"/><rect x="292.3" y="164.6" width="8" height="8"/><rect x="329.3" y="163.6" width="8" height="8"/><rect x="366.3" y="163.6" width="8" height="8"/><rect x="403.3" y="164.6" width="8" height="8"/><rect x="440.3" y="164.8" width="8" height="8"/><rect x="477.3" y="164.8" width="8" height="8"/><rect x="514.3" y="165.2" width="8" height="8"/><rect x="551.3" y="165.8" width="8" height="8"/><rect x="588.3" y="166.4" width="8" height="8"/><rect x="625.3" y="167.2" width="8" height="8"/><rect x="662.3" y="169.6" width="8" height="8"/><rect x="699.3" y="167.2" width="8" height="8"/></g><path d="M37.3 168.5H703.3" stroke="#fff" stroke-width="1" stroke-dasharray="3 2" fill="none"/><g fill="#e2e2e2"><rect x="33.3" y="164.5" width="8" height="8"/><rect x="70.3" y="164.5" width="8" height="8"/><rect x="107.3" y="164.5" width="8" height="8"/><rect x="144.3" y="164.5" width="8" height="8"/><rect x="181.3" y="164.5" width="8" height="8"/><rect x="218.3" y="164.5" width="8" height="8"/><rect x="255.3" y="164.5" width="8" height="8"/><rect x="292.3" y="164.5" width="8" height="8"/><rect x="329.3" y="164.5" width="8" height="8"/><rect x="366.3" y="164.5" width="8" height="8"/><rect x="403.3" y="164.5" width="8" height="8"/><rect x="440.3" y="164.5" width="8" height="8"/><rect x="477.3" y="164.5" width="8" height="8"/><rect x="514.3" y="164.5" width="8" height="8"/><rect x="551.3" y="164.5" width="8" height="8"/><rect x="588.3" y="164.5" width="8" height="8"/><rect x="625.3" y="164.5" width="8" height="8"/><rect x="662.3" y="164.5" width="8" height="8"/><rect x="699.3" y="164.5" width="8" height="8"/></g></svg>
<div class="t sf" style="left:2.5px;top:517.7px;font-size:13.3px;letter-spacing:0.3px;line-height:14px;color:#cfcfcf;">1.1</div>
<div class="t sf" style="left:2.5px;top:489.6px;font-size:13.3px;letter-spacing:0.3px;line-height:14px;color:#cfcfcf;">1.2</div>
<div class="t sf" style="left:2.5px;top:461.6px;font-size:13.3px;letter-spacing:0.3px;line-height:14px;color:#cfcfcf;">1.3</div>
<div class="t sf" style="left:2.5px;top:433.5px;font-size:13.3px;letter-spacing:0.3px;line-height:14px;color:#cfcfcf;">1.4</div>
<div class="t sf" style="left:2.5px;top:405.5px;font-size:13.3px;letter-spacing:0.3px;line-height:14px;color:#cfcfcf;">1.5</div>
<div class="t sf" style="left:2.5px;top:377.5px;font-size:13.3px;letter-spacing:0.3px;line-height:14px;color:#cfcfcf;">1.6</div>
<div class="t sf" style="left:2.5px;top:349.4px;font-size:13.3px;letter-spacing:0.3px;line-height:14px;color:#cfcfcf;">1.7</div>
<div class="t sf" style="left:2.5px;top:321.3px;font-size:13.3px;letter-spacing:0.3px;line-height:14px;color:#cfcfcf;">1.8</div>
<div class="t sf" style="left:2.5px;top:293.3px;font-size:13.3px;letter-spacing:0.3px;line-height:14px;color:#cfcfcf;">1.9</div>
<div class="t sf" style="left:2.5px;top:265.2px;font-size:13.3px;letter-spacing:0.3px;line-height:14px;color:#cfcfcf;">2</div>
<div class="t sf" style="left:2.5px;top:237.2px;font-size:13.3px;letter-spacing:0.3px;line-height:14px;color:#cfcfcf;">2.1</div>
<div class="t sf" style="left:2.5px;top:209.1px;font-size:13.3px;letter-spacing:0.3px;line-height:14px;color:#cfcfcf;">2.2</div>
<div class="t sf" style="left:2.5px;top:181.1px;font-size:13.3px;letter-spacing:0.3px;line-height:14px;color:#cfcfcf;">2.3</div>
<div class="t sf" style="left:2.5px;top:153.0px;font-size:13.3px;letter-spacing:0.3px;line-height:14px;color:#cfcfcf;">2.4</div>
<div class="t sf" style="left:2.5px;top:125.0px;font-size:13.3px;letter-spacing:0.3px;line-height:14px;color:#cfcfcf;">2.5</div>
<div class="t sf" style="left:2.5px;top:96.9px;font-size:13.3px;letter-spacing:0.3px;line-height:14px;color:#cfcfcf;">2.6</div>
<div class="t sf" style="left:2.5px;top:68.9px;font-size:13.3px;letter-spacing:0.3px;line-height:14px;color:#cfcfcf;">2.7</div>
<div class="t sf" style="left:2.5px;top:40.9px;font-size:13.3px;letter-spacing:0.3px;line-height:14px;color:#cfcfcf;">2.8</div>
<div class="t sf" style="left:2.5px;top:12.8px;font-size:13.3px;letter-spacing:0.3px;line-height:14px;color:#cfcfcf;">2.9</div>
<div class="t sf" style="left:76.8px;top:547px;font-size:13.2px;letter-spacing:0.25px;line-height:14px;color:#e6e6e6;">10% White</div>
<div class="t sf" style="left:150.8px;top:547px;font-size:13.2px;letter-spacing:0.25px;line-height:14px;color:#d6d6d6;">20% White</div>
<div class="t sf" style="left:224.8px;top:547px;font-size:13.2px;letter-spacing:0.25px;line-height:14px;color:#c2c2c2;">30% White</div>
<div class="t sf" style="left:298.8px;top:547px;font-size:13.2px;letter-spacing:0.25px;line-height:14px;color:#a8a8a8;">40% White</div>
<div class="t sf" style="left:372.8px;top:547px;font-size:13.2px;letter-spacing:0.25px;line-height:14px;color:#a6a6a6;">50% White</div>
<div class="t sf" style="left:446.8px;top:547px;font-size:13.2px;letter-spacing:0.25px;line-height:14px;color:#7e7e7e;">60% White</div>
<div class="t sf" style="left:520.8px;top:547px;font-size:13.2px;letter-spacing:0.25px;line-height:14px;color:#5c5c5c;">70% White</div>
<div class="t sf" style="left:594.8px;top:547px;font-size:13.2px;letter-spacing:0.25px;line-height:14px;color:#3c3c3c;">80% White</div>
<div class="t sf" style="left:668.8px;top:547px;font-size:13.2px;letter-spacing:0.25px;line-height:14px;color:#202020;">90% White</div>
<div class="t" style="left:282px;width:200px;text-align:center;top:1px;font:bold 14.8px 'Liberation Sans',sans-serif;line-height:16px;color:#d6d61c;">EOTF(Gamma)</div>
<div class="t" style="left:575px;top:507px;font:bold 16px 'Liberation Sans',sans-serif;line-height:16px;color:#8c8c8c;">hcfr.sourceforge.net</div>
</div>
<div class="a" style="left:0;top:1022px;width:2px;height:19px;background:#808080;"></div>
<div class="a" style="left:0;top:1041px;width:1920px;height:1px;background:#fff;"></div>
<div class="a" style="left:0;top:1042px;width:1920px;height:1px;background:#000;"></div>
<div class="a" style="left:0;top:1061px;width:1920px;height:19px;background:#e8eef7;"></div>
<svg class="a" style="left:0;top:1042px" width="400" height="20" viewBox="0 0 400 20">
<g stroke="#000" stroke-width="1.2">
<path d="M119.5 1L127.5 18.5H197L205 1Z" fill="#f0f0f0"/>
<path d="M197 1L205 18.5H302L310 1Z" fill="#f0f0f0"/>
<path d="M302 1L310 18.5H376.5L384.5 1Z" fill="#f0f0f0"/>
<path d="M55 1L63 18.5H119.5L127.5 1" fill="#fff"/>
</g>
<path d="M56 0.5H127" stroke="#fff" stroke-width="1.4"/>
<path d="M127.5 18.5H197M205 18.5H302M310 18.5H376.5" stroke="#909090" stroke-width="1.2"/>
<path d="M63 18.5H119.5" stroke="#fff" stroke-width="1.2"/>
<rect x="0" y="0" width="54.5" height="19" fill="#000"/>
<rect x="1" y="1" width="16.5" height="17" fill="#f0f0f0"/><rect x="17.5" y="1" width="17.5" height="17" fill="#f0f0f0"/><rect x="35" y="1" width="18" height="17" fill="#f0f0f0"/>
<path d="M1.5 17.5V1.5H17M18 17.5V1.5H34.5M35.5 17.5V1.5H52.5" stroke="#fff" fill="none"/>
<path d="M17 1.5V17.5H1.5M34.5 1.5V17.5H18M52.5 1.5V17.5H35.5" stroke="#808080" fill="none"/>
<path d="M16 2.5V16.5H2.5M33.5 2.5V16.5H19M51.5 2.5V16.5H36.5" stroke="#c4c4c4" fill="none"/>
<path d="M6.2 6.3l7.4 6.6m0-6.6l-7.4 6.6" stroke="#000" stroke-width="1.7" fill="none"/>
<path d="M28 5.8v7.6l-4-3.8z M42 5.8v7.6l4-3.8z" fill="#000"/>
</svg>
<div class="t" style="left:67px;top:1046px;font:bold 10.7px 'Liberation Sans',sans-serif;line-height:12px;">Measures</div>
<div class="t" style="left:135px;top:1046px;font:10px 'Liberation Sans',sans-serif;line-height:12px;letter-spacing:-0.4px;">CIE Diagram</div>
<div class="t" style="left:216px;top:1046px;font:10px 'Liberation Sans',sans-serif;line-height:12px;letter-spacing:-0.4px;">Color temperature</div>
<div class="t" style="left:318.5px;top:1046px;font:10px 'Liberation Sans',sans-serif;line-height:12px;letter-spacing:-0.4px;">RGB Levels</div>
<div class="t" style="left:2.5px;top:1064px;font:11.3px 'Liberation Sans',sans-serif;line-height:14px;letter-spacing:-0.15px;">Ready</div>
<!-- right bottom -->
<svg class="a" style="left:1750px;top:1043px" width="16" height="16" viewBox="0 0 16 16"><path d="M1 1h13v9l-2 5h-3.5l-1-3-1 3H3L1 10z" fill="#000"/><path d="M2.2 2.2h10.6v7.5h-10.6z" fill="#7a7a00"/><path d="M3 4.5c2-1.5 4-1.5 6 0v-1.5l3 2.8-3 2.6V7c-2-1-4-1-6 0z" fill="#e01010" stroke="#fff" stroke-width=".5"/><rect x="9" y="10.2" width="4" height="3.6" fill="#ffff00"/><path d="M3.5 10.5h3v3h-2.4z" fill="#7a7a00"/></svg>
<div class="cb" style="left:1846px;top:1044px;width:12px;height:12px;box-shadow:none;border-color:#808080 #e0e0e0 #e0e0e0 #808080;"></div>
<div class="t" style="left:1864px;top:1045px;font:11px 'Liberation Sans',sans-serif;line-height:12px;">Reference</div>
<div class="sunk" style="left:1743px;top:1062px;width:74px;height:18px;border-color:#a9bfdc #fff #fff #a9bfdc;"></div>
<div class="sunk" style="left:1820px;top:1062px;width:28px;height:18px;border-color:#a9bfdc #fff #fff #a9bfdc;"></div>
<div class="sunk" style="left:1851px;top:1062px;width:33px;height:18px;border-color:#a9bfdc #fff #fff #a9bfdc;"></div>
<div class="sunk" style="left:1887px;top:1062px;width:32px;height:18px;border-color:#a9bfdc #fff #fff #a9bfdc;"></div>
<div class="t" style="left:1853.5px;top:1065px;font:11.8px 'Liberation Sans',sans-serif;line-height:14px;">NUM</div>

</body></html>
